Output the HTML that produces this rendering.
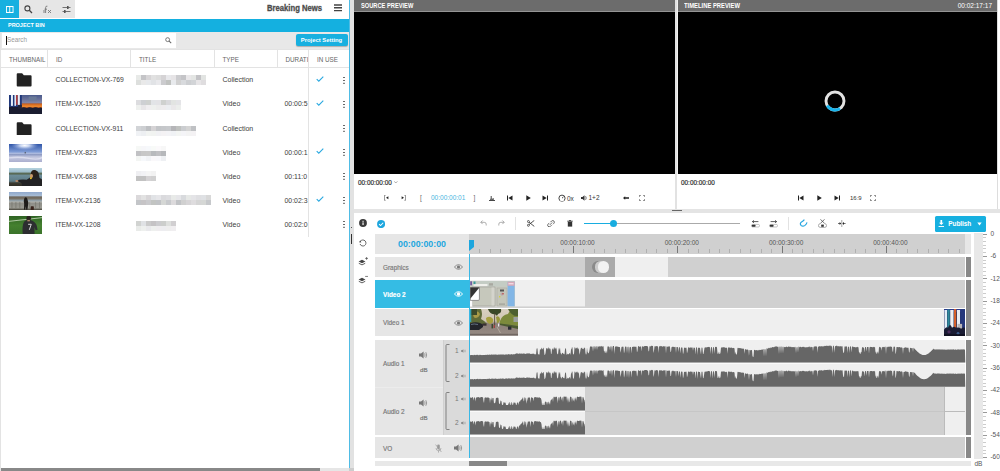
<!DOCTYPE html>
<html><head><meta charset="utf-8"><title>Editor</title>
<style>
*{box-sizing:border-box;margin:0;padding:0}
html,body{width:1000px;height:471px;overflow:hidden;background:#fff;font-family:"Liberation Sans",sans-serif;color:#444}
.a{position:absolute}
.sx{display:inline-block;transform-origin:left center;white-space:nowrap}
#root{position:relative;width:1000px;height:471px;overflow:hidden;background:#fff}
/* left */
.tabblue{left:0;top:0;width:19px;height:18.3px;background:#17b0e0}
.tabgrey{left:19px;top:0;width:56px;height:18.3px;background:#e6e6e6}
.bn{left:266.5px;top:3.4px;font-weight:bold;font-size:8.2px;color:#4c4c4c;-webkit-text-stroke:.3px #4c4c4c;line-height:11px;transform:scaleX(.937);transform-origin:left center;white-space:nowrap}
.bluebar{left:0;top:19px;width:349px;height:12.5px;background:#14b0e0;color:#fff;font-weight:bold;font-size:6px;line-height:12px;padding-left:7.7px}
.srow{left:0;top:31.5px;width:349px;height:17.5px;background:#e8e8e8}
.sinput{left:2px;top:33px;width:174px;height:14.5px;background:#fff;font-size:6.3px;line-height:14.5px;color:#999;padding-left:5px}
.caret{left:6px;top:35.5px;width:1px;height:9px;background:#111}
.psbtn{left:296px;top:34px;width:52px;height:12px;background:#17b0e0;border-radius:2px;color:#fff;font-weight:bold;font-size:6.1px;line-height:12px;text-align:center;box-shadow:0 1px 1px rgba(0,0,0,.25)}
.th{top:49px;height:18.5px;font-size:6.3px;line-height:19px;color:#666;border-right:1px solid #e3e3e3;border-bottom:1px solid #e3e3e3;border-top:1px solid #e3e3e3;padding-left:8px;overflow:hidden;white-space:nowrap}
.row{left:0;width:349px;height:24px;font-size:6.8px;line-height:24.6px;color:#3c3c3c}
.row span{position:absolute;top:0;white-space:nowrap}
.fold{left:16.3px;width:16.3px;height:13.8px}
.thumb{left:8.7px;width:33.5px;height:18.8px;overflow:hidden}
.blur{height:8px;top:8px;filter:blur(1.2px);background:#e4e4e4}
.inuse{left:308px;top:49px;width:41px;height:188px;border-left:1px solid #e3e3e3;background:#fff}
.kebab{left:343.2px;width:1.7px;height:1.7px;background:#555;border-radius:1px;box-shadow:0 2.9px 0 #555,0 5.8px 0 #555}
/* right */
.phead{top:0;height:12px;background:#6c6c6c;border-bottom:1px solid #949494;color:#fff;font-weight:bold;font-size:6.7px;line-height:11.5px;padding-left:6.8px}
.black{top:12px;height:162px;background:#000}
.tc{font-size:6.4px;color:#222;line-height:9px;-webkit-text-stroke:.15px #222}
.ctrl{font-size:6.5px;color:#333;line-height:9px;white-space:nowrap}
/* timeline */
.trk{left:375px;width:94px;background:#e6e6e6;font-size:7px;color:#777}
.lane{left:469px;width:496.3px;background:#d0d0d0}
.clip{background:#efefef}
.endbar{left:966px;width:5px;background:#888}
.tk{position:absolute;top:248.5px;width:1px;height:4px;background:#b0b0b0}
.tk.mj{top:246px;height:6.5px;background:#777}
.tl{position:absolute;top:239px;width:42px;text-align:center;font-size:6.5px;line-height:8px;color:#555}
.dbt{position:absolute;left:983.2px;width:2.4px;height:1px;background:#ccc}
.dbt.mj{width:4px;background:#999}
.dbl{position:absolute;left:990.4px;font-size:6.5px;line-height:8px;color:#555}
.lbl{position:absolute;left:8px;top:.6px;font-size:6.4px;color:#777;-webkit-text-stroke:.15px currentColor}
</style></head><body><div id="root">

<!-- LEFT PANEL -->
<div class="a tabblue"><svg class="a" style="left:6px;top:5.7px" width="7.5" height="7" viewBox="0 0 10 8" preserveAspectRatio="none"><rect x=".6" y=".6" width="8.8" height="6.8" fill="none" stroke="#fff" stroke-width="1.2"/><rect x="4.4" y="0" width="1.2" height="8" fill="#fff"/></svg></div>
<div class="a tabgrey">
<svg class="a" style="left:5px;top:5px" width="9" height="9" viewBox="0 0 9 9"><circle cx="3.4" cy="3.4" r="2.5" fill="none" stroke="#444" stroke-width="1.1"/><path d="M5.3 5.3L8 8" stroke="#444" stroke-width="1.3"/></svg>
<svg class="a" style="left:24px;top:5px" width="9" height="9" viewBox="0 0 9 9"><path d="M1 8V5M2.6 8V2.5Q2.6 .8 4.4 1.2M1.5 4.2H4M5 5l3 3M8 5L5 8" stroke="#777" stroke-width=".9" fill="none"/></svg>
<svg class="a" style="left:43px;top:5px" width="9" height="9" viewBox="0 0 9 9"><path d="M.5 2.5h8M.5 6.5h8" stroke="#666" stroke-width=".9"/><rect x="5" y="1" width="1.6" height="3" fill="#555"/><rect x="2" y="5" width="1.6" height="3" fill="#555"/></svg>
</div>
<div class="a bn">Breaking News</div>
<svg class="a" style="left:334px;top:3.5px" width="8" height="8" viewBox="0 0 8 8"><path d="M0 1h8M0 3.8h8M0 6.6h8" stroke="#444" stroke-width="1.4"/></svg>
<div class="a bluebar"><span class="sx" style="transform:scaleX(.912)">PROJECT BIN</span></div>
<div class="a srow"></div>
<div class="a sinput">Search</div><div class="a caret"></div>
<svg class="a" style="left:165px;top:37px" width="7" height="7" viewBox="0 0 9 9"><circle cx="3.4" cy="3.4" r="2.5" fill="none" stroke="#666" stroke-width="1.1"/><path d="M5.3 5.3L8 8" stroke="#666" stroke-width="1.3"/></svg>
<div class="a psbtn"><span class="sx" style="transform:scaleX(.962);transform-origin:center">Project Setting</span></div>

<div class="a th" style="left:0;width:48px;border-left:1px solid #e3e3e3">THUMBNAIL</div>
<div class="a th" style="left:48px;width:83px">ID</div>
<div class="a th" style="left:131px;width:83.5px">TITLE</div>
<div class="a th" style="left:214.5px;width:63px">TYPE</div>
<div class="a th" style="left:277.5px;width:31px">DURATION</div>

<!-- rows -->
<div class="a row" style="top:68.40px"><svg class="a fold" style="top:5px" viewBox="0 0 15 13"><path d="M.5 1.2Q.5 .3 1.4 .3H5.6L7.2 2.2H13.6Q14.5 2.2 14.5 3.1V11.8Q14.5 12.7 13.6 12.7H1.4Q.5 12.7 .5 11.8Z" fill="#222"/></svg><span style="left:55.5px">COLLECTION-VX-769</span><svg class="a" style="left:136.1px;top:0" width="70" height="24" viewBox="0 0 70 24" shape-rendering="crispEdges"><rect x="0" y="6.5" width="5" height="5" fill="#e8eae8"/><rect x="5" y="6.5" width="5" height="5" fill="#c4c4c7"/><rect x="10" y="6.5" width="5" height="5" fill="#d7d5d7"/><rect x="15" y="6.5" width="5" height="5" fill="#e1e1e1"/><rect x="20" y="6.5" width="5" height="5" fill="#dddddd"/><rect x="25" y="6.5" width="5" height="5" fill="#d5d3d5"/><rect x="30" y="6.5" width="5" height="5" fill="#e8e8eb"/><rect x="35" y="6.5" width="5" height="5" fill="#e6e4e6"/><rect x="40" y="6.5" width="5" height="5" fill="#cccccf"/><rect x="45" y="6.5" width="5" height="5" fill="#c4c4c7"/><rect x="50" y="6.5" width="5" height="5" fill="#e9e7e9"/><rect x="55" y="6.5" width="5" height="5" fill="#e3e5e3"/><rect x="60" y="6.5" width="5" height="5" fill="#c3c3c6"/><rect x="65" y="6.5" width="5" height="5" fill="#e2e4e2"/><rect x="0" y="11.5" width="5" height="5" fill="#dddfdd"/><rect x="5" y="11.5" width="5" height="5" fill="#e9e9e9"/><rect x="10" y="11.5" width="5" height="5" fill="#e7e9ec"/><rect x="15" y="11.5" width="5" height="5" fill="#e1e3e6"/><rect x="20" y="11.5" width="5" height="5" fill="#e9e9ec"/><rect x="25" y="11.5" width="5" height="5" fill="#cbcbce"/><rect x="30" y="11.5" width="5" height="5" fill="#c0c2c0"/><rect x="35" y="11.5" width="5" height="5" fill="#e8eaed"/><rect x="40" y="11.5" width="5" height="5" fill="#d1d1d1"/><rect x="45" y="11.5" width="5" height="5" fill="#d8dadd"/><rect x="50" y="11.5" width="5" height="5" fill="#cdcfd2"/><rect x="55" y="11.5" width="5" height="5" fill="#d2d4d7"/><rect x="60" y="11.5" width="5" height="5" fill="#e7e5e7"/><rect x="65" y="11.5" width="5" height="5" fill="#dfdddf"/></svg><span style="left:222.5px;font-size:7px">Collection</span></div>
<div class="a row" style="top:92.45px"><svg class="a thumb" style="top:3px" viewBox="0 0 34 19" preserveAspectRatio="none"><defs><linearGradient id="gc1" x1="0" y1="0" x2="0" y2="1"><stop offset="0" stop-color="#4a5a8c"/><stop offset="1" stop-color="#8a8aa8"/></linearGradient><linearGradient id="gc2" x1="0" y1="0" x2="0" y2="1"><stop offset="0" stop-color="#c85a18"/><stop offset=".6" stop-color="#f08a30"/><stop offset="1" stop-color="#b04a18"/></linearGradient></defs><rect width="34" height="19" fill="#1a1c34"/><rect x="12" y="0" width="22" height="9" fill="url(#gc1)"/><rect x="20" y="1.5" width="8" height="4" fill="#6a7a98"/><rect x="12" y="8.5" width="22" height="5" fill="url(#gc2)"/><rect x="0" y="0" width="13" height="12" fill="#20387a"/><rect x="2" y="0" width="2" height="11" fill="#e8f0fa"/><rect x="5.5" y="0" width="1.6" height="11" fill="#dfe8f5"/><rect x="7.3" y="0" width="1.4" height="10" fill="#d04030"/><rect x="9" y="0" width="2" height="11" fill="#e8f0fa"/><rect x="0" y="13" width="34" height="6" fill="#15172a"/><path d="M0 14Q3 11.5 6 13.5Q9 11 12 13.5Q15 11.5 18 13.5Q21 11.5 24 13.5Q27 11.5 30 13.5Q32 12 34 13.5V19H0z" fill="#1a1c30"/><rect x="9" y="10" width="4" height="4" fill="#202238"/></svg><span style="left:55.5px">ITEM-VX-1520</span><svg class="a" style="left:136.1px;top:0" width="45" height="24" viewBox="0 0 45 24" shape-rendering="crispEdges"><rect x="0" y="7.7" width="5" height="5" fill="#dcdcdf"/><rect x="5" y="7.7" width="5" height="5" fill="#ced0d3"/><rect x="10" y="7.7" width="5" height="5" fill="#cfd1cf"/><rect x="15" y="7.7" width="5" height="5" fill="#e2e4e7"/><rect x="20" y="7.7" width="5" height="5" fill="#e3e3e6"/><rect x="25" y="7.7" width="5" height="5" fill="#cfd1cf"/><rect x="30" y="7.7" width="5" height="5" fill="#d9d9dc"/><rect x="35" y="7.7" width="5" height="5" fill="#e2e4e2"/><rect x="40" y="7.7" width="5" height="5" fill="#e4e4e7"/><rect x="0" y="12.7" width="5" height="5" fill="#eef0ee"/><rect x="5" y="12.7" width="5" height="5" fill="#e8e6e8"/><rect x="10" y="12.7" width="5" height="5" fill="#f0eef0"/><rect x="15" y="12.7" width="5" height="5" fill="#eef0ee"/><rect x="20" y="12.7" width="5" height="5" fill="#ececec"/><rect x="25" y="12.7" width="5" height="5" fill="#eeecee"/><rect x="30" y="12.7" width="5" height="5" fill="#eceef1"/><rect x="35" y="12.7" width="5" height="5" fill="#eae8ea"/><rect x="40" y="12.7" width="5" height="5" fill="#eceeec"/></svg><span style="left:222.5px;font-size:7px">Video</span><span style="left:284.5px;font-size:6.9px">00:00:5</span></div>
<div class="a row" style="top:116.50px"><svg class="a fold" style="top:5px" viewBox="0 0 15 13"><path d="M.5 1.2Q.5 .3 1.4 .3H5.6L7.2 2.2H13.6Q14.5 2.2 14.5 3.1V11.8Q14.5 12.7 13.6 12.7H1.4Q.5 12.7 .5 11.8Z" fill="#222"/></svg><span style="left:55.5px">COLLECTION-VX-911</span><svg class="a" style="left:136.1px;top:0" width="60" height="24" viewBox="0 0 60 24" shape-rendering="crispEdges"><rect x="0" y="8.5" width="5" height="5" fill="#d2d4d7"/><rect x="5" y="8.5" width="5" height="5" fill="#cdcfd2"/><rect x="10" y="8.5" width="5" height="5" fill="#bec0c3"/><rect x="15" y="8.5" width="5" height="5" fill="#d5d3d5"/><rect x="20" y="8.5" width="5" height="5" fill="#c3c5c8"/><rect x="25" y="8.5" width="5" height="5" fill="#c5c7ca"/><rect x="30" y="8.5" width="5" height="5" fill="#c7c9cc"/><rect x="35" y="8.5" width="5" height="5" fill="#b5b5b8"/><rect x="40" y="8.5" width="5" height="5" fill="#bfc1bf"/><rect x="45" y="8.5" width="5" height="5" fill="#cbcdd0"/><rect x="50" y="8.5" width="5" height="5" fill="#d4d4d4"/><rect x="55" y="8.5" width="5" height="5" fill="#bfc1c4"/><rect x="0" y="13.5" width="5" height="5" fill="#f0f2f5"/><rect x="5" y="13.5" width="5" height="5" fill="#edeff2"/><rect x="10" y="13.5" width="5" height="5" fill="#f2f4f2"/><rect x="15" y="13.5" width="5" height="5" fill="#f1f3f1"/><rect x="20" y="13.5" width="5" height="5" fill="#f1f1f4"/><rect x="25" y="13.5" width="5" height="5" fill="#f4f2f4"/><rect x="30" y="13.5" width="5" height="5" fill="#f3f3f6"/><rect x="35" y="13.5" width="5" height="5" fill="#f0f2f5"/><rect x="40" y="13.5" width="5" height="5" fill="#f3f5f3"/><rect x="45" y="13.5" width="5" height="5" fill="#f4f4f7"/><rect x="50" y="13.5" width="5" height="5" fill="#f3f3f3"/><rect x="55" y="13.5" width="5" height="5" fill="#f4f2f4"/></svg><span style="left:222.5px;font-size:7px">Collection</span></div>
<div class="a row" style="top:140.55px"><svg class="a thumb" style="top:3px" viewBox="0 0 34 19" preserveAspectRatio="none"><defs><linearGradient id="gs1" x1="0" y1="0" x2="0" y2="1"><stop offset="0" stop-color="#2f55a8"/><stop offset=".42" stop-color="#7f9cd6"/><stop offset=".5" stop-color="#aebce0"/><stop offset=".56" stop-color="#8f9cc4"/><stop offset=".7" stop-color="#c4c8e0"/><stop offset="1" stop-color="#a6aacb"/></linearGradient><radialGradient id="gs2" cx=".47" cy=".12" r=".4"><stop offset="0" stop-color="#fff"/><stop offset=".35" stop-color="#dfe8fa" stop-opacity=".85"/><stop offset="1" stop-color="#9fb4e4" stop-opacity="0"/></radialGradient></defs><rect width="34" height="19" fill="url(#gs1)"/><rect width="34" height="12" fill="url(#gs2)"/><path d="M0 14Q10 12.5 20 14.5T34 13.5" stroke="#e4e6f4" stroke-width="1.4" fill="none" opacity=".7"/><rect x="16" y="8" width=".8" height="1.6" fill="#333"/></svg><span style="left:55.5px">ITEM-VX-823</span><svg class="a" style="left:136.1px;top:0" width="30" height="24" viewBox="0 0 30 24" shape-rendering="crispEdges"><rect x="0" y="4.5" width="5" height="5" fill="#f6f8f6"/><rect x="5" y="4.5" width="5" height="5" fill="#f6f6f9"/><rect x="10" y="4.5" width="5" height="5" fill="#f6f8fb"/><rect x="15" y="4.5" width="5" height="5" fill="#f8faf8"/><rect x="20" y="4.5" width="5" height="5" fill="#fbf9fb"/><rect x="25" y="4.5" width="5" height="5" fill="#f7f7f7"/><rect x="0" y="9.5" width="5" height="5" fill="#c1c1c4"/><rect x="5" y="9.5" width="5" height="5" fill="#c7c7c7"/><rect x="10" y="9.5" width="5" height="5" fill="#c8c8c8"/><rect x="15" y="9.5" width="5" height="5" fill="#b8babd"/><rect x="20" y="9.5" width="5" height="5" fill="#c0c0c3"/><rect x="25" y="9.5" width="5" height="5" fill="#b6b8bb"/><rect x="0" y="14.5" width="5" height="5" fill="#f3f5f3"/><rect x="5" y="14.5" width="5" height="5" fill="#f6f8fb"/><rect x="10" y="14.5" width="5" height="5" fill="#f1f3f6"/><rect x="15" y="14.5" width="5" height="5" fill="#faf8fa"/><rect x="20" y="14.5" width="5" height="5" fill="#f8f8fb"/><rect x="25" y="14.5" width="5" height="5" fill="#eef0f3"/></svg><span style="left:222.5px;font-size:7px">Video</span><span style="left:284.5px;font-size:6.9px">00:00:1</span></div>
<div class="a row" style="top:164.60px"><svg class="a thumb" style="top:3px" viewBox="0 0 34 19" preserveAspectRatio="none"><defs><linearGradient id="gr1" x1="0" y1="0" x2="0" y2="1"><stop offset="0" stop-color="#b5d2de"/><stop offset=".2" stop-color="#9cbccc"/><stop offset=".3" stop-color="#54644c"/><stop offset=".4" stop-color="#6c8c98"/><stop offset=".7" stop-color="#5f7c86"/><stop offset=".8" stop-color="#3c3a30"/><stop offset="1" stop-color="#2c2a24"/></linearGradient></defs><rect width="34" height="19" fill="url(#gr1)"/><path d="M7 13Q12 11 18 12L22 9Q22 3 26 2.5Q30 2.5 30.5 7L31 10Q34 11 34 13V19H13Q14 15.5 11 14.5z" fill="#222224"/><ellipse cx="25.5" cy="5.5" rx="3.2" ry="3.6" fill="#2a2018"/><ellipse cx="22.8" cy="8" rx="1.6" ry="2" fill="#c89a70"/><circle cx="22.2" cy="10.4" r="1" fill="#e8c020"/><ellipse cx="8" cy="13.2" rx="1.6" ry="1" fill="#b88a68"/></svg><span style="left:55.5px">ITEM-VX-688</span><svg class="a" style="left:136.1px;top:0" width="20" height="24" viewBox="0 0 20 24" shape-rendering="crispEdges"><rect x="0" y="5.8" width="5" height="5" fill="#efeff2"/><rect x="5" y="5.8" width="5" height="5" fill="#f2f2f5"/><rect x="10" y="5.8" width="5" height="5" fill="#f5f5f5"/><rect x="15" y="5.8" width="5" height="5" fill="#f2f2f2"/><rect x="0" y="10.8" width="5" height="5" fill="#c2c2c2"/><rect x="5" y="10.8" width="5" height="5" fill="#c2c2c2"/><rect x="10" y="10.8" width="5" height="5" fill="#d4d2d4"/><rect x="15" y="10.8" width="5" height="5" fill="#d0d0d0"/></svg><span style="left:222.5px;font-size:7px">Video</span><span style="left:284.5px;font-size:6.9px">00:11:0</span></div>
<div class="a row" style="top:188.65px"><svg class="a thumb" style="top:3px" viewBox="0 0 34 19" preserveAspectRatio="none"><defs><linearGradient id="gb1" x1="0" y1="0" x2="0" y2="1"><stop offset="0" stop-color="#8fa8cc"/><stop offset=".2" stop-color="#a8bcd4"/><stop offset=".26" stop-color="#6e665c"/><stop offset=".38" stop-color="#7a7468"/><stop offset=".42" stop-color="#8a9aa4"/><stop offset=".5" stop-color="#9aa4a8"/><stop offset=".54" stop-color="#8c8c86"/><stop offset=".86" stop-color="#9a9a92"/><stop offset=".9" stop-color="#5c5a50"/><stop offset="1" stop-color="#4c4a42"/></linearGradient></defs><rect width="34" height="19" fill="url(#gb1)"/><path d="M0 10.2H34" stroke="#c4c4bc" stroke-width=".7"/><path d="M3 10V16.5M7 10V16.5M11 10V16.5M21 10V16.5M27 10V16.5M31 10V16.5" stroke="#6c6c64" stroke-width=".6"/><path d="M15.6 6.2Q17 4.4 18.4 6.2L19.6 10.5L19 16L18.6 18H17.4L17.2 14.5L16.4 18H15.2L15.4 12Q14.4 9 15.6 6.2z" fill="#1e1c1a"/><rect x="22" y="14.5" width="3.2" height="4" rx=".6" fill="#3a241c"/></svg><span style="left:55.5px">ITEM-VX-2136</span><svg class="a" style="left:136.1px;top:0" width="75" height="24" viewBox="0 0 75 24" shape-rendering="crispEdges"><rect x="0" y="6.3" width="5" height="5" fill="#dbd9db"/><rect x="5" y="6.3" width="5" height="5" fill="#e2e2e2"/><rect x="10" y="6.3" width="5" height="5" fill="#d8d6d8"/><rect x="15" y="6.3" width="5" height="5" fill="#e1e3e6"/><rect x="20" y="6.3" width="5" height="5" fill="#e6e6e9"/><rect x="25" y="6.3" width="5" height="5" fill="#dadadd"/><rect x="30" y="6.3" width="5" height="5" fill="#dddde0"/><rect x="35" y="6.3" width="5" height="5" fill="#e8eae8"/><rect x="40" y="6.3" width="5" height="5" fill="#e6e6e9"/><rect x="45" y="6.3" width="5" height="5" fill="#d8dadd"/><rect x="50" y="6.3" width="5" height="5" fill="#e6e8e6"/><rect x="55" y="6.3" width="5" height="5" fill="#e4e4e7"/><rect x="60" y="6.3" width="5" height="5" fill="#dfdfe2"/><rect x="65" y="6.3" width="5" height="5" fill="#dfe1e4"/><rect x="70" y="6.3" width="5" height="5" fill="#d8d8d8"/><rect x="0" y="11.3" width="5" height="5" fill="#c3c5c8"/><rect x="5" y="11.3" width="5" height="5" fill="#c6c4c6"/><rect x="10" y="11.3" width="5" height="5" fill="#cacacd"/><rect x="15" y="11.3" width="5" height="5" fill="#c2c4c2"/><rect x="20" y="11.3" width="5" height="5" fill="#c1c3c6"/><rect x="25" y="11.3" width="5" height="5" fill="#d5d7d5"/><rect x="30" y="11.3" width="5" height="5" fill="#c8cacd"/><rect x="35" y="11.3" width="5" height="5" fill="#dcdadc"/><rect x="40" y="11.3" width="5" height="5" fill="#c1c3c6"/><rect x="45" y="11.3" width="5" height="5" fill="#d0d0d0"/><rect x="50" y="11.3" width="5" height="5" fill="#d7d5d7"/><rect x="55" y="11.3" width="5" height="5" fill="#dedcde"/><rect x="60" y="11.3" width="5" height="5" fill="#d5d5d5"/><rect x="65" y="11.3" width="5" height="5" fill="#d5d7d5"/><rect x="70" y="11.3" width="5" height="5" fill="#c6c8cb"/></svg><span style="left:222.5px;font-size:7px">Video</span><span style="left:284.5px;font-size:6.9px">00:02:3</span></div>
<div class="a row" style="top:212.70px"><svg class="a thumb" style="top:3px" viewBox="0 0 34 19" preserveAspectRatio="none"><defs><linearGradient id="gf1" x1="0" y1="0" x2="0" y2="1"><stop offset="0" stop-color="#2f6424"/><stop offset=".5" stop-color="#44802f"/><stop offset="1" stop-color="#3a722a"/></linearGradient></defs><rect width="34" height="19" fill="url(#gf1)"/><path d="M0 5.4L34 1.6" stroke="#cfe0c4" stroke-width=".8"/><path d="M14 19Q13 9 15.5 5.5Q18 3.5 21.5 4Q26 5 28 9L29 14L27 14.5L25.8 11L26 19z" fill="#2c2e30"/><ellipse cx="20" cy="2.4" rx="2.4" ry="2.6" fill="#2a2420"/><rect x="18.6" y="4" width="2.6" height="1.4" fill="#b08868"/><path d="M19.4 8.4h3.2L20.6 14" stroke="#d8d8d8" stroke-width="1" fill="none"/></svg><span style="left:55.5px">ITEM-VX-1208</span><svg class="a" style="left:136.1px;top:0" width="40" height="24" viewBox="0 0 40 24" shape-rendering="crispEdges"><rect x="0" y="7.5" width="5" height="5" fill="#d1d3d1"/><rect x="5" y="7.5" width="5" height="5" fill="#e0e2e5"/><rect x="10" y="7.5" width="5" height="5" fill="#cbcbcb"/><rect x="15" y="7.5" width="5" height="5" fill="#c5c3c5"/><rect x="20" y="7.5" width="5" height="5" fill="#cccccf"/><rect x="25" y="7.5" width="5" height="5" fill="#cccecc"/><rect x="30" y="7.5" width="5" height="5" fill="#dee0de"/><rect x="35" y="7.5" width="5" height="5" fill="#d1cfd1"/><rect x="0" y="12.5" width="5" height="5" fill="#e9ebe9"/><rect x="5" y="12.5" width="5" height="5" fill="#eef0ee"/><rect x="10" y="12.5" width="5" height="5" fill="#e9e9ec"/><rect x="15" y="12.5" width="5" height="5" fill="#eef0ee"/><rect x="20" y="12.5" width="5" height="5" fill="#efedef"/><rect x="25" y="12.5" width="5" height="5" fill="#ededf0"/><rect x="30" y="12.5" width="5" height="5" fill="#eeeeee"/><rect x="35" y="12.5" width="5" height="5" fill="#f0eef0"/></svg><span style="left:222.5px;font-size:7px">Video</span><span style="left:284.5px;font-size:6.9px">00:02:0</span></div>

<div class="a inuse"></div>
<div class="a th" style="left:308px;width:41px;border-left:1px solid #e3e3e3;border-right:0">IN USE</div>
<svg class="a" style="left:316px;top:75.6px" width="8" height="6" viewBox="0 0 8 6"><path d="M.7 3.2L2.8 5.2L7.3 .7" stroke="#29a8e0" stroke-width="1.1" fill="none"/></svg>
<svg class="a" style="left:316px;top:99.6px" width="8" height="6" viewBox="0 0 8 6"><path d="M.7 3.2L2.8 5.2L7.3 .7" stroke="#29a8e0" stroke-width="1.1" fill="none"/></svg>
<svg class="a" style="left:316px;top:147.6px" width="8" height="6" viewBox="0 0 8 6"><path d="M.7 3.2L2.8 5.2L7.3 .7" stroke="#29a8e0" stroke-width="1.1" fill="none"/></svg>
<svg class="a" style="left:316px;top:195.6px" width="8" height="6" viewBox="0 0 8 6"><path d="M.7 3.2L2.8 5.2L7.3 .7" stroke="#29a8e0" stroke-width="1.1" fill="none"/></svg>
<div class="a kebab" style="top:76.6px"></div><div class="a kebab" style="top:100.6px"></div><div class="a kebab" style="top:124.6px"></div><div class="a kebab" style="top:148.6px"></div><div class="a kebab" style="top:172.6px"></div><div class="a kebab" style="top:196.6px"></div><div class="a kebab" style="top:220.6px"></div>
<div class="a" style="left:0;top:31.5px;width:1px;height:440px;background:#e3e3e3"></div>

<!-- splitter -->
<div class="a" style="left:1px;top:468px;width:348px;height:3px;background:#e6e6e6"></div><div class="a" style="left:1px;top:468px;width:319px;height:3px;background:#888"></div>
<div class="a" style="left:348.8px;top:0;width:1.2px;height:471px;background:#4fbce5"></div>
<div class="a" style="left:350px;top:0;width:4px;height:471px;background:#e2e2e2"></div>
<div class="a" style="left:351.2px;top:234px;width:1px;height:9.6px;background:#333"></div><div class="a" style="left:351.2px;top:226.6px;width:1px;height:1.2px;background:#555"></div>

<!-- SOURCE PREVIEW -->
<div class="a phead" style="left:354px;width:320.5px"><span class="sx" style="transform:scaleX(.853)">SOURCE PREVIEW</span></div>
<div class="a black" style="left:354px;width:320.5px"></div>
<div class="a" style="left:674.5px;top:0;width:3px;height:174px;background:#f2f2f2"></div><div class="a" style="left:675.3px;top:0;width:1.7px;height:209px;background:#e2e2e2"></div>
<div class="a" style="left:997px;top:0;width:1px;height:209px;background:#ddd"></div>
<div class="a tc" style="left:358px;top:178.4px">00:00:00:00</div><svg class="a" style="left:394.3px;top:181.4px" width="3.6" height="2.4" viewBox="0 0 3.6 2.4"><path d="M.2 .3L1.8 2L3.4 .3" stroke="#666" stroke-width=".55" fill="none"/></svg>
<svg class="a" style="left:384px;top:195.2px" width="5" height="5.6" viewBox="0 0 5 5.6"><path d="M1.6 .3H.4V5.3H1.6" stroke="#444" stroke-width=".6" fill="none"/><path d="M4.4 1.3V4.3L2 2.8z" fill="#222"/></svg>
<svg class="a" style="left:401.4px;top:195.2px" width="5" height="5.6" viewBox="0 0 5 5.6"><path d="M3.4 .3H4.6V5.3H3.4" stroke="#444" stroke-width=".6" fill="none"/><path d="M.6 1.3V4.3L3 2.8z" fill="#222"/></svg>
<div class="a ctrl" style="left:420px;top:193px;color:#666">[</div>
<div class="a ctrl" style="left:431px;top:193px;color:#4ab5e0">00:00:00:01</div>
<div class="a ctrl" style="left:473.5px;top:193px;color:#666">]</div>
<svg class="a" style="left:489px;top:195px" width="6" height="6" viewBox="0 0 6 6"><path d="M0 5.5h6M1 4.3h3.5M2.2 1v3M4.2 3.2v1.5" stroke="#333" stroke-width=".9" fill="none"/></svg>
<svg class="a" style="left:507px;top:195px" width="6" height="6" viewBox="0 0 6 6"><path d="M.5 .5v5" stroke="#222" stroke-width="1"/><path d="M5.5 .5v5L1.3 3z" fill="#222"/></svg>
<svg class="a" style="left:526px;top:195px" width="5" height="6" viewBox="0 0 5 6"><path d="M.3 .3v5.4L4.8 3z" fill="#222"/></svg>
<svg class="a" style="left:542px;top:195px" width="6" height="6" viewBox="0 0 6 6"><path d="M5.5 .5v5" stroke="#222" stroke-width="1"/><path d="M.5 .5v5L4.7 3z" fill="#222"/></svg>
<svg class="a" style="left:558px;top:194px" width="8" height="8" viewBox="0 0 8 8"><circle cx="4" cy="4.2" r="3.1" fill="none" stroke="#333" stroke-width=".9"/><path d="M4 4.2L5.5 2.8" stroke="#333" stroke-width=".9"/><rect x="2.3" y="5.6" width="3.4" height="1.6" fill="#fff"/></svg>
<div class="a ctrl" style="left:567px;top:193.5px">0x</div>
<svg class="a" style="left:581px;top:195px" width="7" height="6" viewBox="0 0 7 6"><path d="M0 2h1.5L3.5 .3v5.4L1.5 4H0z" fill="#333"/><path d="M4.6 1.2Q5.8 3 4.6 4.8" stroke="#333" stroke-width=".7" fill="none"/></svg>
<div class="a ctrl" style="left:588.5px;top:193px">1+2</div>
<svg class="a" style="left:623px;top:196px" width="6" height="4" viewBox="0 0 6 4"><path d="M0 2L2.2 .2V1.2H6V2.8H2.2V3.8z" fill="#222"/></svg>
<svg class="a" style="left:639px;top:195px" width="6" height="6" viewBox="0 0 6 6"><path d="M.4 1.8V.4H1.8M4.2 .4H5.6V1.8M5.6 4.2V5.6H4.2M1.8 5.6H.4V4.2" stroke="#555" stroke-width=".8" fill="none"/></svg>

<!-- TIMELINE PREVIEW -->
<div class="a phead" style="left:677.5px;width:319.5px"><span class="sx" style="transform:scaleX(.875)">TIMELINE PREVIEW</span></div>
<div class="a" style="left:940px;top:0;width:52px;text-align:right;color:#fff;font-size:6.5px;line-height:12px">00:02:17:17</div>
<div class="a black" style="left:677.5px;width:319.5px"></div>
<svg class="a" style="left:822.5px;top:89.3px" width="24" height="24" viewBox="0 0 24 24"><circle cx="12" cy="12" r="9" fill="none" stroke="#e2e2e2" stroke-width="2.9"/><path d="M4.21 16.5A9 9 0 0 0 17.03 19.46" stroke="#18b4ec" stroke-width="2.9" fill="none"/></svg>
<div class="a tc" style="left:681px;top:178.4px">00:00:00:00</div>
<svg class="a" style="left:798px;top:195px" width="6" height="6" viewBox="0 0 6 6"><path d="M.5 .5v5" stroke="#222" stroke-width="1"/><path d="M5.5 .5v5L1.3 3z" fill="#222"/></svg>
<svg class="a" style="left:817px;top:195px" width="5" height="6" viewBox="0 0 5 6"><path d="M.3 .3v5.4L4.8 3z" fill="#222"/></svg>
<svg class="a" style="left:834px;top:195px" width="6" height="6" viewBox="0 0 6 6"><path d="M5.5 .5v5" stroke="#222" stroke-width="1"/><path d="M.5 .5v5L4.7 3z" fill="#222"/></svg>
<div class="a ctrl" style="left:850px;top:193.5px;font-size:6px">16:9</div>
<svg class="a" style="left:870px;top:195px" width="6" height="6" viewBox="0 0 6 6"><path d="M.4 1.8V.4H1.8M4.2 .4H5.6V1.8M5.6 4.2V5.6H4.2M1.8 5.6H.4V4.2" stroke="#555" stroke-width=".8" fill="none"/></svg>

<!-- horizontal divider -->
<div class="a" style="left:354px;top:208.7px;width:646px;height:4.2px;background:#e4e4e4"></div>
<div class="a" style="left:672px;top:210.3px;width:10px;height:1px;background:#666"></div>

<!-- TIMELINE TOOLBAR -->
<svg class="a" style="left:359.1px;top:219.3px" width="8" height="8" viewBox="0 0 9 9"><circle cx="4.5" cy="4.5" r="4.4" fill="#3a3a3a"/><rect x="3.9" y="3.8" width="1.3" height="3" fill="#fff"/><rect x="3.9" y="2" width="1.3" height="1.2" fill="#fff"/></svg>
<svg class="a" style="left:376.9px;top:219.5px" width="8.2" height="8.2" viewBox="0 0 9 9"><circle cx="4.5" cy="4.5" r="4.4" fill="#1da6de"/><path d="M2.3 4.6L3.9 6.2L6.8 3" stroke="#fff" stroke-width="1.1" fill="none"/></svg>
<svg class="a" style="left:359px;top:239.2px" width="8" height="8" viewBox="0 0 9 9"><path d="M1.6 2.6A3.4 3.4 0 1 1 1.2 5.6" fill="none" stroke="#444" stroke-width=".9"/><path d="M0 3.6L2.6 3.8L1.6 1.4z" fill="#444"/></svg>
<svg class="a" style="left:358.2px;top:256.8px" width="10.5" height="9.5" viewBox="0 0 11 10"><path d="M4.2 3L.6 4.8L4.2 6.6L7.8 4.8z" fill="#444"/><path d="M.8 6.6L4.2 8.3L7.6 6.6" stroke="#444" stroke-width=".9" fill="none"/><path d="M7.5 1.5h3M9 0v3" stroke="#444" stroke-width=".7"/></svg>
<svg class="a" style="left:358.2px;top:274.8px" width="10.5" height="9.5" viewBox="0 0 11 10"><path d="M4.2 3L.6 4.8L4.2 6.6L7.8 4.8z" fill="#444"/><path d="M.8 6.6L4.2 8.3L7.6 6.6" stroke="#444" stroke-width=".9" fill="none"/><path d="M7.5 1.5h3" stroke="#444" stroke-width=".7"/></svg>

<svg class="a" style="left:480px;top:220px" width="7" height="6" viewBox="0 0 7 6"><path d="M2.6 .5L.8 2.3L2.6 4.1M.8 2.3H4.2Q6.2 2.3 6.2 4.2V5.5" stroke="#999" stroke-width=".8" fill="none"/></svg>
<svg class="a" style="left:498px;top:220px" width="7" height="6" viewBox="0 0 7 6"><path d="M4.4 .5L6.2 2.3L4.4 4.1M6.2 2.3H2.8Q.8 2.3 .8 4.2V5.5" stroke="#999" stroke-width=".8" fill="none"/></svg>
<div class="a" style="left:515px;top:217px;width:1px;height:13px;background:#e2e2e2"></div>
<svg class="a" style="left:527px;top:220px" width="7.6" height="7" viewBox="0 0 7.6 7"><path d="M2 2.2L7.3 6.4M2 4.6L7.3 .4" stroke="#333" stroke-width=".85"/><circle cx="1.4" cy="1.5" r="1" fill="none" stroke="#333" stroke-width=".75"/><circle cx="1.4" cy="5.3" r="1" fill="none" stroke="#333" stroke-width=".75"/></svg>
<svg class="a" style="left:546.5px;top:219.6px" width="8" height="7.4" viewBox="0 0 8 7.4"><path d="M3.4 2.2L4.6 1Q5.8 0 7 1.1Q7.9 2.2 6.9 3.3L5.9 4.3M4.6 5.2L3.4 6.4Q2.2 7.4 1 6.3Q.1 5.2 1.1 4.1L2.1 3.1M2.8 4.9L5.2 2.5" stroke="#444" stroke-width=".8" fill="none"/></svg>
<svg class="a" style="left:567px;top:219.5px" width="6" height="7" viewBox="0 0 6 7"><path d="M.3 1.2h5.4M2 .4h2" stroke="#333" stroke-width=".9"/><path d="M.8 1.8h4.4V6.6H.8z" fill="#333"/></svg>
<div class="a" style="left:584px;top:223px;width:30px;height:1.3px;background:#18ade0"></div>
<div class="a" style="left:614px;top:223.3px;width:126px;height:1px;background:#aaa"></div>
<div class="a" style="left:609.7px;top:220px;width:7.2px;height:7.2px;border-radius:50%;background:#18ade0"></div>
<svg class="a" style="left:750.6px;top:219.5px" width="9" height="8" viewBox="0 0 9 8"><path d="M3 .4L1.4 1.6L3 2.8M1.4 1.6H7.4" stroke="#333" stroke-width=".8" fill="none"/><rect x=".5" y="4.4" width="8" height="2.6" rx="1.2" fill="#fff" stroke="#888" stroke-width=".5"/><rect x=".8" y="4.7" width="3.8" height="2" rx=".8" fill="#333"/></svg>
<svg class="a" style="left:768.8px;top:219.5px" width="9" height="8" viewBox="0 0 9 8"><path d="M6 .4L7.6 1.6L6 2.8M7.6 1.6H1.6" stroke="#333" stroke-width=".8" fill="none"/><rect x=".5" y="4.4" width="8" height="2.6" rx="1.2" fill="#fff" stroke="#888" stroke-width=".5"/><rect x=".8" y="4.7" width="3.8" height="2" rx=".8" fill="#333"/></svg>
<div class="a" style="left:788px;top:217px;width:1px;height:13px;background:#e2e2e2"></div>
<svg class="a" style="left:798.6px;top:219.4px" width="9" height="8.4" viewBox="0 0 9 8.4"><path d="M5.4 .6Q4.2 2.2 2.2 3.2Q.6 4.6 2 6.4Q3.8 8 6 6.4Q7.6 5 8 3.4" stroke="#27a6e0" stroke-width="1.15" fill="none"/></svg>
<svg class="a" style="left:818.4px;top:219.2px" width="9" height="8.8" viewBox="0 0 9 8.8"><path d="M2.4 .3L6.6 4.4M6.6 .3L2.4 4.4" stroke="#444" stroke-width=".75"/><path d="M2.6 4.4Q.4 4.8 .4 6.6Q.4 8.4 2.4 8.4H6.6Q8.6 8.4 8.6 6.6Q8.6 4.8 6.4 4.4" fill="#fff" stroke="#666" stroke-width=".55"/><rect x="3.2" y="5.6" width="2.6" height="2.2" fill="#333"/></svg>
<svg class="a" style="left:838.4px;top:220px" width="7.6" height="7" viewBox="0 0 7.6 7"><path d="M3.8 0V7" stroke="#666" stroke-width=".6"/><path d="M0 3.5H2M5.6 3.5H7.6" stroke="#333" stroke-width=".7"/><path d="M1.6 2L3.2 3.5L1.6 5zM6 2L4.4 3.5L6 5z" fill="#222"/></svg>

<div class="a" style="left:934.5px;top:216px;width:51.5px;height:15.5px;background:#17b0e0;border-radius:1.5px"></div>
<svg class="a" style="left:938px;top:219.6px" width="6.6" height="7.6" viewBox="0 0 7 8"><path d="M2.6 0h1.8v2.8H6L3.5 5.4L1 2.8h1.6z" fill="#fff"/><rect x=".6" y="6.4" width="5.8" height="1.2" fill="#fff"/></svg>
<div class="a" style="left:948.3px;top:219px;color:#fff;font-weight:bold;font-size:6.5px;line-height:9px;letter-spacing:-.1px">Publish</div>
<svg class="a" style="left:977px;top:222px" width="5" height="4" viewBox="0 0 5 4"><path d="M.3 .5h4.4L2.5 3.6z" fill="#fff"/></svg>

<!-- TRACK HEADERS -->
<div class="a trk" style="top:234px;height:20px;color:#1da6de;font-weight:bold;font-size:8.8px;line-height:20px;text-align:center">00:00:00:00</div>
<div class="a" style="left:468.5px;top:234px;width:496.7px;height:20px;background:#d0d0d0"></div>
<div class="a" style="left:965.2px;top:234px;width:5.8px;height:20px;background:#e6e6e6"></div>
<div class="tk" style="left:479.0px"></div><div class="tk" style="left:489.5px"></div><div class="tk" style="left:499.9px"></div><div class="tk" style="left:510.3px"></div><div class="tk" style="left:520.8px"></div><div class="tk" style="left:531.2px"></div><div class="tk" style="left:541.6px"></div><div class="tk" style="left:552.0px"></div><div class="tk" style="left:562.5px"></div><div class="tk mj" style="left:572.9px"></div><div class="tl" style="left:556.5px">00:00:10:00</div><div class="tk" style="left:583.3px"></div><div class="tk" style="left:593.8px"></div><div class="tk" style="left:604.2px"></div><div class="tk" style="left:614.6px"></div><div class="tk" style="left:625.0px"></div><div class="tk" style="left:635.5px"></div><div class="tk" style="left:645.9px"></div><div class="tk" style="left:656.3px"></div><div class="tk" style="left:666.8px"></div><div class="tk mj" style="left:677.2px"></div><div class="tl" style="left:660.8px">00:00:20:00</div><div class="tk" style="left:687.6px"></div><div class="tk" style="left:698.1px"></div><div class="tk" style="left:708.5px"></div><div class="tk" style="left:718.9px"></div><div class="tk" style="left:729.4px"></div><div class="tk" style="left:739.8px"></div><div class="tk" style="left:750.2px"></div><div class="tk" style="left:760.6px"></div><div class="tk" style="left:771.1px"></div><div class="tk mj" style="left:781.5px"></div><div class="tl" style="left:765.1px">00:00:30:00</div><div class="tk" style="left:791.9px"></div><div class="tk" style="left:802.4px"></div><div class="tk" style="left:812.8px"></div><div class="tk" style="left:823.2px"></div><div class="tk" style="left:833.7px"></div><div class="tk" style="left:844.1px"></div><div class="tk" style="left:854.5px"></div><div class="tk" style="left:864.9px"></div><div class="tk" style="left:875.4px"></div><div class="tk mj" style="left:885.8px"></div><div class="tl" style="left:869.4px">00:00:40:00</div><div class="tk" style="left:896.2px"></div><div class="tk" style="left:906.7px"></div><div class="tk" style="left:917.1px"></div><div class="tk" style="left:927.5px"></div><div class="tk" style="left:938.0px"></div><div class="tk" style="left:948.4px"></div><div class="tk" style="left:958.8px"></div>

<div class="a trk" style="top:257px;height:20px;line-height:20px"><span class="lbl">Graphics</span></div>
<div class="a trk" style="top:279.7px;height:28.8px;line-height:29px;background:#35bce4;color:#fff;font-weight:bold"><span class="lbl" style="color:#fff">Video 2</span></div>
<div class="a trk" style="top:308.5px;height:27.5px;line-height:28px"><span class="lbl">Video 1</span></div>
<div class="a trk" style="top:339.5px;height:47.7px;line-height:48px"><span class="lbl">Audio 1</span></div>
<div class="a trk" style="top:387.2px;height:47.4px;line-height:48px"><span class="lbl">Audio 2</span></div>
<div class="a trk" style="top:437.4px;height:20.7px;line-height:21px"><span class="lbl">VO</span></div>
<!-- eye icons -->
<svg class="a" style="left:454px;top:264px" width="9" height="6" viewBox="0 0 9 6"><path d="M.4 3Q4.5 -1.6 8.6 3Q4.5 7.6 .4 3z" fill="none" stroke="#777" stroke-width=".8"/><circle cx="4.5" cy="3" r="1.6" fill="#777"/></svg>
<svg class="a" style="left:454px;top:291px" width="9" height="6" viewBox="0 0 9 6"><path d="M.4 3Q4.5 -1.6 8.6 3Q4.5 7.6 .4 3z" fill="none" stroke="#fff" stroke-width=".9"/><circle cx="4.5" cy="3" r="1.7" fill="#fff"/></svg>
<svg class="a" style="left:454px;top:319.5px" width="9" height="6" viewBox="0 0 9 6"><path d="M.4 3Q4.5 -1.6 8.6 3Q4.5 7.6 .4 3z" fill="none" stroke="#777" stroke-width=".8"/><circle cx="4.5" cy="3" r="1.6" fill="#777"/></svg>
<!-- audio header details -->
<div class="a" style="left:375px;top:386.9px;width:67.5px;height:1px;background:#ececec"></div><div class="a" style="left:442.5px;top:339.5px;width:26.5px;height:95.1px;background:#dadada"></div>
<div class="a" style="left:442.5px;top:339.5px;width:1px;height:95.1px;background:#d0d0d0"></div>
<svg class="a" style="left:419px;top:351px" width="9" height="8" viewBox="0 0 9 8"><path d="M0 2.6h2L4.6 .4v7.2L2 5.4H0z" fill="#777"/><path d="M5.6 2.4Q6.6 4 5.6 5.6M6.8 1.2Q8.6 4 6.8 6.8" stroke="#777" stroke-width=".7" fill="none"/></svg>
<svg class="a" style="left:419px;top:399px" width="9" height="8" viewBox="0 0 9 8"><path d="M0 2.6h2L4.6 .4v7.2L2 5.4H0z" fill="#777"/><path d="M5.6 2.4Q6.6 4 5.6 5.6M6.8 1.2Q8.6 4 6.8 6.8" stroke="#777" stroke-width=".7" fill="none"/></svg>
<div class="a" style="left:420px;top:366px;font-size:6.2px;line-height:8px;color:#777;-webkit-text-stroke:.2px #777">dB</div>
<div class="a" style="left:420px;top:414px;font-size:6.2px;line-height:8px;color:#777;-webkit-text-stroke:.2px #777">dB</div>
<svg class="a" style="left:445px;top:344px" width="5" height="38" viewBox="0 0 5 38"><path d="M4.5 .5H2Q1 .5 1 1.5V36.5Q1 37.5 2 37.5H4.5" fill="none" stroke="#777" stroke-width=".9"/></svg>
<svg class="a" style="left:445px;top:392px" width="5" height="38" viewBox="0 0 5 38"><path d="M4.5 .5H2Q1 .5 1 1.5V36.5Q1 37.5 2 37.5H4.5" fill="none" stroke="#777" stroke-width=".9"/></svg>
<div class="a" style="left:455px;top:347.3px;font-size:6.5px;line-height:8px;color:#777">1</div><svg class="a" style="left:461px;top:349.2px" width="5" height="4" viewBox="0 0 5 4"><path d="M0 1.3h1L2.4 .2v3.6L1 2.7H0z" fill="#888"/><path d="M3.1 1Q3.8 2 3.1 3M4 .5Q5 2 4 3.5" stroke="#999" stroke-width=".45" fill="none"/></svg>
<div class="a" style="left:455px;top:371.8px;font-size:6.5px;line-height:8px;color:#777">2</div><svg class="a" style="left:461px;top:373.7px" width="5" height="4" viewBox="0 0 5 4"><path d="M0 1.3h1L2.4 .2v3.6L1 2.7H0z" fill="#888"/><path d="M3.1 1Q3.8 2 3.1 3M4 .5Q5 2 4 3.5" stroke="#999" stroke-width=".45" fill="none"/></svg>
<div class="a" style="left:455px;top:395.3px;font-size:6.5px;line-height:8px;color:#777">1</div><svg class="a" style="left:461px;top:397.2px" width="5" height="4" viewBox="0 0 5 4"><path d="M0 1.3h1L2.4 .2v3.6L1 2.7H0z" fill="#888"/><path d="M3.1 1Q3.8 2 3.1 3M4 .5Q5 2 4 3.5" stroke="#999" stroke-width=".45" fill="none"/></svg>
<div class="a" style="left:455px;top:419.3px;font-size:6.5px;line-height:8px;color:#777">2</div><svg class="a" style="left:461px;top:421.2px" width="5" height="4" viewBox="0 0 5 4"><path d="M0 1.3h1L2.4 .2v3.6L1 2.7H0z" fill="#888"/><path d="M3.1 1Q3.8 2 3.1 3M4 .5Q5 2 4 3.5" stroke="#999" stroke-width=".45" fill="none"/></svg>
<svg class="a" style="left:434.5px;top:443.5px" width="7" height="9" viewBox="0 0 7 9"><rect x="2.2" y=".4" width="2.6" height="5" rx="1.3" fill="#999"/><path d="M1 4Q1 6.6 3.5 6.6Q6 6.6 6 4M3.5 6.6V8.6M.6 .6L6.4 8" stroke="#999" stroke-width=".7" fill="none"/></svg>
<svg class="a" style="left:454px;top:444px" width="9" height="8" viewBox="0 0 9 8"><path d="M0 2.6h2L4.6 .4v7.2L2 5.4H0z" fill="#777"/><path d="M5.6 2.4Q6.6 4 5.6 5.6M6.8 1.2Q8.6 4 6.8 6.8" stroke="#777" stroke-width=".7" fill="none"/></svg>

<!-- LANES -->
<div class="a lane" style="top:257px;height:20px"></div>
<div class="a" style="left:585px;top:257px;width:30px;height:20px;background:#aaa"></div>
<div class="a clip" style="left:615px;top:257px;width:53px;height:20px"></div>
<div class="a" style="left:592.3px;top:261px;width:11.8px;height:11.8px;border-radius:50%;background:#8a8a8a"></div>
<div class="a" style="left:594.5px;top:261px;width:11.8px;height:11.8px;border-radius:50%;background:#ccc"></div>
<div class="a" style="left:597.5px;top:261px;width:11.8px;height:11.8px;border-radius:50%;background:#f2f2f2"></div>

<div class="a lane" style="top:279.7px;height:28.8px"></div>
<div class="a clip" style="left:469px;top:279.7px;width:116px;height:27.3px;border-bottom:1px solid #ddd"></div>
<svg class="a" style="left:469.7px;top:281px;width:45px;height:25.5px" viewBox="0 0 45 25.5" preserveAspectRatio="none"><rect width="45" height="25.5" fill="#c9cac0"/><rect x="0" y="0" width="37.5" height="5.5" fill="#c4ccc4"/><rect x="3.5" y="3" width="14" height="2.2" fill="#f0f0ec"/><rect x="3.5" y=".5" width="2" height="2.6" fill="#3a9a9a"/><rect x=".3" y=".3" width="1.6" height="4" fill="#6a50a0"/><rect x="19" y="2.2" width="4" height="2.4" fill="#a8a8a0"/>
<rect x="2.5" y="6" width="22.5" height="19" fill="#c6c8bc" stroke="#9c9c94" stroke-width=".6"/><rect x="21.5" y="6.5" width="3" height="18" fill="#d4d4cc"/><rect x="27" y="7" width="10" height="18" fill="#c4c6ba" stroke="#a4a49c" stroke-width=".5"/><rect x="30" y="8.5" width="4" height="2" fill="#555"/><circle cx="32" cy="13" r="1.6" fill="#b8a8a8"/><circle cx="33" cy="12.8" r=".8" fill="#c04040"/><rect x="29" y="15" width="1.4" height="1.4" fill="#d8d040"/><rect x="29" y="22.5" width="6" height="1.2" fill="#a0a098"/>
<rect x="37.6" y=".8" width="7" height="24.5" fill="#82b6e6"/><rect x="37.6" y=".8" width="7" height="4" fill="#d8a8b8"/><rect x="38.5" y="2" width="5" height="1.4" fill="#f0d8e0"/>
<rect x="0" y="19" width="2.4" height="6.5" fill="#fbfbfb"/><path d="M.3 6.6H9.4V18.2Q9.4 19.4 8.2 19.4H.3z" fill="#fff" stroke="#555" stroke-width=".6"/><path d="M.3 6.6H9.4L.3 17.8z" fill="#333"/></svg>
<div class="a lane clip" style="top:308.5px;height:27.5px;background:#efefef"></div>
<svg class="a" style="left:469.7px;top:309.2px;width:48.3px;height:26.6px" viewBox="0 0 48.3 26.6" preserveAspectRatio="none"><defs><linearGradient id="gv1" x1="0" y1="0" x2="0" y2="1"><stop offset="0" stop-color="#d9d0c0"/><stop offset=".45" stop-color="#cfc6b4"/><stop offset=".55" stop-color="#8c8078"/><stop offset="1" stop-color="#968a84"/></linearGradient></defs>
<rect width="48.3" height="26.6" fill="url(#gv1)"/><path d="M0 0H11Q13 5 11 10Q15 12 17 15L0 17z" fill="#5f6a38"/><path d="M4 3Q8 1 10 5Q9 9 5 9Q2 7 4 3z" fill="#a89a48"/><path d="M0 0H7V6H0z" fill="#3c4a2c"/>
<path d="M18 0H31Q32 4 28 5Q27 8 25 5Q20 6 18 0z" fill="#3a4828"/><path d="M24.6 4V16" stroke="#4a4030" stroke-width=".8"/><path d="M16 9Q20 6 23 10Q24 14 20 15Q16 14 16 9z" fill="#a8a040"/><path d="M26 8Q29 6 30 10Q30 14 27 14z" fill="#98983c"/>
<path d="M30 12Q32 6 38 5Q40 0 48.3 0V17L30 15z" fill="#7c8a3c"/><path d="M38 0H48.3V7Q42 8 38 0z" fill="#4c6030"/><rect x="43.5" y="8" width="4.8" height="5" fill="#9aa0a0"/><path d="M30 14.5L48.3 17V20L30 16z" fill="#4a5a30"/>
<path d="M0 14.5Q5 12.5 10 14L13 15.5V18L9 21H0z" fill="#24262c"/><path d="M1 15.5Q4 14.5 8 15.5" stroke="#8090a8" stroke-width=".7" fill="none"/><rect x="12.5" y="14.5" width="4" height="2.2" fill="#3a3034"/>
<rect x="21.5" y="15" width="1.6" height="4.4" fill="#3c4a30"/><rect x="23.6" y="16" width="1.4" height="3" fill="#a04040"/><rect x="28" y="14.5" width="1.2" height="3" fill="#e8e8e8"/><rect x="38" y="17.5" width="3.4" height="3.2" fill="#2a2a34"/><path d="M27 18L30.5 24" stroke="#c8c0b0" stroke-width=".6"/>
<rect x="0" y="0" width="1.3" height="13" fill="#30b8d8" opacity=".8"/><rect x="0" y="24.8" width="48.3" height="1.8" fill="#5a504c" opacity=".6"/></svg>
<svg class="a" style="left:944.1px;top:309.2px;width:21.1px;height:26.8px" viewBox="0 0 21 27" preserveAspectRatio="none"><defs><linearGradient id="ge1" x1="0" y1="0" x2="0" y2="1"><stop offset="0" stop-color="#fff" stop-opacity="1"/><stop offset=".6" stop-color="#fff" stop-opacity=".9"/><stop offset=".8" stop-color="#fff" stop-opacity="0"/></linearGradient></defs>
<rect width="21" height="27" fill="#1c2a5c"/><rect x="0" y="0" width="21" height="3" fill="#2a3a8a"/><rect x=".4" y="1" width="2.6" height="20" fill="#e4ecf6"/><rect x="3.3" y=".5" width="2.4" height="20" fill="#2f8a9a"/><rect x="6.2" y="1" width="3.3" height="20" fill="#eef0f4"/><rect x="10" y="0" width="2.2" height="20" fill="#d8602a"/><rect x="12.9" y="1" width="3.1" height="20" fill="#e8ecf4"/><rect x="16.3" y="0" width="4.7" height="20" fill="#26387c"/>
<rect x="13.5" y="15" width="4.5" height="6" fill="#b8b4b8"/><path d="M0 21Q2 17 4 19Q6 13 8 19Q10 17 12 19Q15 18 17 20Q19 18 21 19V27H0z" fill="#1a1c34"/><circle cx="5" cy="23" r="1.6" fill="#4a2c5c"/><circle cx="14" cy="24.5" r="1.4" fill="#3a5a8a"/><rect x="0" y="25.6" width="21" height="1.4" fill="#0c0c18"/></svg>
<div class="a lane clip" style="top:339.5px;height:47.7px;background:#efefef"></div>
<div class="a" style="left:469px;top:362.6px;width:496.3px;height:1px;background:#fafafa"></div>
<div class="a lane" style="top:387.2px;height:47.4px"></div>
<div class="a clip" style="left:469px;top:387px;width:116px;height:47.5px"></div>
<div class="a" style="left:469px;top:410.6px;width:116px;height:1px;background:#fafafa"></div><div class="a" style="left:585px;top:410.6px;width:359px;height:1px;background:#c6c6c6"></div>
<div class="a clip" style="left:944px;top:387px;width:22px;height:47.5px;border-left:1px solid #bbb"></div>
<div class="a" style="left:944px;top:410.6px;width:21.3px;height:1px;background:#bbb"></div>
<svg class="a" style="left:0;top:0" width="1000" height="471" viewBox="0 0 1000 471">
<path d="M469,362.6L469.0,355.3L469.5,354.9L470.0,354.9L470.5,355.2L471.0,355.1L471.5,355.1L472.0,355.0L472.5,354.9L473.0,355.3L473.5,355.3L474.0,354.8L474.5,355.0L475.0,354.8L475.5,355.3L476.0,355.0L476.5,354.8L477.0,355.1L477.5,354.7L478.0,354.7L478.5,355.2L479.0,355.2L479.5,354.9L480.0,354.6L480.5,355.0L481.0,355.1L481.5,354.9L482.0,355.2L482.5,355.0L483.0,354.9L483.5,354.9L484.0,355.0L484.5,355.0L485.0,355.0L485.5,354.8L486.0,354.9L486.5,355.1L487.0,354.6L487.5,354.8L488.0,354.7L488.5,355.0L489.0,354.5L489.5,354.5L490.0,355.0L490.5,354.8L491.0,354.6L491.5,354.6L492.0,354.4L492.5,354.7L493.0,354.5L493.5,354.6L494.0,354.8L494.5,354.6L495.0,354.4L495.5,354.4L496.0,354.6L496.5,354.6L497.0,354.9L497.5,354.8L498.0,354.4L498.5,354.6L499.0,354.8L499.5,354.6L500.0,354.5L500.5,354.5L501.0,354.6L501.5,354.6L502.0,354.5L502.5,354.4L503.0,354.5L503.5,354.6L504.0,354.5L504.5,354.8L505.0,354.8L505.5,354.4L506.0,354.2L506.5,354.4L507.0,354.5L507.5,354.6L508.0,354.4L508.5,354.1L509.0,354.3L509.5,354.4L510.0,354.2L510.5,354.6L511.0,354.4L511.5,354.1L512.0,354.3L512.5,354.4L513.0,354.5L513.5,354.3L514.0,354.1L514.5,354.6L515.0,354.1L515.5,354.1L516.0,353.3L516.5,353.4L517.0,353.4L517.5,353.6L518.0,353.6L518.5,353.7L519.0,354.0L519.5,353.3L520.0,353.5L520.5,353.8L521.0,353.6L521.5,353.6L522.0,353.7L522.5,353.7L523.0,353.6L523.5,353.5L524.0,353.5L524.5,353.6L525.0,354.0L525.5,353.8L526.0,353.9L526.5,353.5L527.0,353.3L527.5,353.4L528.0,353.4L528.5,353.3L529.0,353.8L529.5,353.3L530.0,353.5L530.5,353.9L531.0,354.0L531.5,354.0L532.0,353.4L532.5,353.8L533.0,353.9L533.5,353.5L534.0,353.7L534.5,353.9L535.0,354.7L535.5,353.8L536.0,354.7L536.5,349.3L537.0,348.0L537.5,348.7L538.0,354.3L538.5,353.9L539.0,355.0L539.5,354.1L540.0,348.8L540.5,349.5L541.0,349.8L541.5,347.4L542.0,348.6L542.5,349.5L543.0,348.3L543.5,347.6L544.0,350.0L544.5,355.1L545.0,354.7L545.5,353.3L546.0,349.6L546.5,348.0L547.0,348.1L547.5,348.5L548.0,349.4L548.5,347.2L549.0,347.7L549.5,348.6L550.0,349.4L550.5,348.2L551.0,354.1L551.5,353.7L552.0,349.1L552.5,348.2L553.0,349.9L553.5,349.2L554.0,347.2L554.5,347.5L555.0,349.2L555.5,347.5L556.0,349.2L556.5,347.3L557.0,353.2L557.5,354.1L558.0,354.5L558.5,350.1L559.0,347.5L559.5,350.0L560.0,347.6L560.5,352.7L561.0,353.7L561.5,354.7L562.0,352.9L562.5,352.7L563.0,353.3L563.5,353.8L564.0,354.2L564.5,354.2L565.0,349.5L565.5,348.1L566.0,348.8L566.5,354.6L567.0,354.8L567.5,353.4L568.0,354.4L568.5,353.9L569.0,354.3L569.5,352.9L570.0,352.9L570.5,355.1L571.0,349.5L571.5,349.1L572.0,347.1L572.5,347.8L573.0,354.3L573.5,354.6L574.0,353.4L574.5,347.6L575.0,347.3L575.5,349.1L576.0,347.5L576.5,348.0L577.0,348.6L577.5,347.1L578.0,349.4L578.5,347.9L579.0,349.8L579.5,354.7L580.0,352.8L580.5,349.5L581.0,347.8L581.5,348.3L582.0,347.6L582.5,349.0L583.0,349.1L583.5,349.2L584.0,347.5L584.5,348.3L585.0,347.2L585.5,352.9L586.0,354.8L586.5,353.7L587.0,347.3L587.5,351.8L588.0,352.7L588.5,353.4L589.0,352.6L589.5,350.0L590.0,346.8L590.5,346.5L591.0,346.3L591.5,346.7L592.0,346.5L592.5,346.8L593.0,351.6L593.5,346.7L594.0,346.1L594.5,346.4L595.0,349.8L595.5,346.4L596.0,346.6L596.5,346.1L597.0,350.1L597.5,346.8L598.0,346.1L598.5,346.7L599.0,346.7L599.5,345.9L600.0,346.7L600.5,346.5L601.0,345.8L601.5,346.3L602.0,346.6L602.5,346.6L603.0,346.5L603.5,346.0L604.0,351.8L604.5,350.5L605.0,353.2L605.5,352.4L606.0,350.2L606.5,352.0L607.0,353.5L607.5,346.3L608.0,346.7L608.5,346.2L609.0,346.8L609.5,346.9L610.0,350.4L610.5,346.6L611.0,346.3L611.5,346.5L612.0,351.9L612.5,346.9L613.0,346.1L613.5,346.1L614.0,346.1L614.5,354.0L615.0,346.9L615.5,346.5L616.0,346.2L616.5,346.6L617.0,346.5L617.5,346.5L618.0,347.0L618.5,346.7L619.0,346.9L619.5,347.0L620.0,347.2L620.5,352.8L621.0,350.3L621.5,346.9L622.0,346.7L622.5,346.7L623.0,346.4L623.5,347.0L624.0,353.6L624.5,351.3L625.0,347.1L625.5,346.6L626.0,346.5L626.5,347.1L627.0,353.3L627.5,346.9L628.0,346.8L628.5,346.8L629.0,353.9L629.5,347.4L630.0,347.1L630.5,347.3L631.0,346.8L631.5,353.5L632.0,347.3L632.5,346.7L633.0,347.0L633.5,346.5L634.0,346.8L634.5,346.4L635.0,347.1L635.5,346.8L636.0,346.4L636.5,347.1L637.0,352.6L637.5,350.8L638.0,346.4L638.5,346.1L639.0,346.3L639.5,346.8L640.0,347.0L640.5,346.5L641.0,346.1L641.5,351.6L642.0,346.1L642.5,346.8L643.0,346.0L643.5,346.9L644.0,346.6L644.5,346.0L645.0,346.0L645.5,345.9L646.0,345.9L646.5,346.0L647.0,346.1L647.5,346.6L648.0,346.3L648.5,350.9L649.0,351.4L649.5,346.0L650.0,346.4L650.5,346.6L651.0,345.7L651.5,345.8L652.0,346.1L652.5,346.1L653.0,345.7L653.5,352.9L654.0,350.8L654.5,346.2L655.0,346.3L655.5,346.6L656.0,345.9L656.5,346.2L657.0,346.0L657.5,346.5L658.0,346.3L658.5,353.0L659.0,346.5L659.5,346.4L660.0,345.8L660.5,346.3L661.0,346.3L661.5,346.1L662.0,346.5L662.5,346.8L663.0,346.3L663.5,346.3L664.0,346.2L664.5,346.4L665.0,346.2L665.5,346.2L666.0,353.5L666.5,346.5L667.0,346.5L667.5,346.8L668.0,346.7L668.5,346.6L669.0,346.3L669.5,346.3L670.0,347.0L670.5,351.9L671.0,351.8L671.5,347.3L672.0,346.9L672.5,346.5L673.0,347.3L673.5,346.7L674.0,346.7L674.5,347.3L675.0,346.9L675.5,346.8L676.0,352.9L676.5,347.0L677.0,347.0L677.5,347.2L678.0,347.0L678.5,352.1L679.0,346.9L679.5,347.3L680.0,347.8L680.5,353.6L681.0,347.8L681.5,347.5L682.0,347.3L682.5,348.0L683.0,354.3L683.5,352.4L684.0,347.8L684.5,347.6L685.0,348.0L685.5,347.5L686.0,348.2L686.5,347.2L687.0,353.4L687.5,351.4L688.0,348.0L688.5,347.3L689.0,347.3L689.5,348.1L690.0,347.5L690.5,347.4L691.0,347.6L691.5,347.5L692.0,347.8L692.5,347.3L693.0,350.8L693.5,347.8L694.0,347.4L694.5,347.8L695.0,348.0L695.5,354.5L696.0,348.1L696.5,347.3L697.0,347.2L697.5,354.9L698.0,347.5L698.5,347.7L699.0,348.0L699.5,347.8L700.0,347.8L700.5,351.4L701.0,354.5L701.5,347.8L702.0,347.5L702.5,347.9L703.0,354.2L703.5,353.8L704.0,351.1L704.5,347.7L705.0,347.6L705.5,347.3L706.0,347.6L706.5,347.2L707.0,347.6L707.5,347.1L708.0,347.0L708.5,347.0L709.0,346.8L709.5,347.2L710.0,347.3L710.5,353.9L711.0,347.0L711.5,347.2L712.0,347.3L712.5,354.4L713.0,347.6L713.5,346.9L714.0,347.6L714.5,353.7L715.0,347.2L715.5,346.8L716.0,347.0L716.5,346.8L717.0,347.6L717.5,353.3L718.0,354.2L718.5,353.0L719.0,351.5L719.5,354.0L720.0,354.1L720.5,352.6L721.0,347.4L721.5,347.4L722.0,347.6L722.5,347.5L723.0,347.1L723.5,347.3L724.0,347.5L724.5,347.3L725.0,347.6L725.5,347.8L726.0,348.1L726.5,347.8L727.0,347.5L727.5,353.8L728.0,347.3L728.5,347.7L729.0,347.2L729.5,347.8L730.0,347.4L730.5,347.9L731.0,347.6L731.5,347.4L732.0,348.1L732.5,348.2L733.0,347.8L733.5,347.9L734.0,348.1L734.5,348.5L735.0,354.3L735.5,351.6L736.0,354.3L736.5,354.7L737.0,353.5L737.5,347.9L738.0,347.7L738.5,347.9L739.0,348.2L739.5,347.9L740.0,348.1L740.5,348.2L741.0,348.3L741.5,348.6L742.0,348.5L742.5,348.7L743.0,348.5L743.5,348.7L744.0,348.8L744.5,353.8L745.0,349.0L745.5,349.3L746.0,349.6L746.5,349.8L747.0,349.5L747.5,349.4L748.0,349.8L748.5,350.2L749.0,356.0L749.5,350.0L750.0,350.1L750.5,350.6L751.0,350.1L751.5,349.9L752.0,350.3L752.5,355.9L753.0,357.1L753.5,356.8L754.0,350.3L754.5,349.8L755.0,350.1L755.5,350.4L756.0,350.1L756.5,350.1L757.0,350.5L757.5,350.5L758.0,349.7L758.5,350.3L759.0,350.5L759.5,349.7L760.0,349.9L760.5,350.0L761.0,349.8L761.5,349.5L762.0,350.0L762.5,349.4L763.0,349.3L763.5,349.1L764.0,356.4L764.5,349.1L765.0,349.4L765.5,348.9L766.0,356.2L766.5,348.5L767.0,348.3L767.5,348.7L768.0,348.7L768.5,347.8L769.0,348.0L769.5,347.7L770.0,348.4L770.5,347.4L771.0,347.6L771.5,347.7L772.0,347.5L772.5,347.1L773.0,346.9L773.5,347.4L774.0,346.8L774.5,347.2L775.0,346.2L775.5,346.7L776.0,346.3L776.5,346.4L777.0,346.6L777.5,346.9L778.0,346.6L778.5,347.0L779.0,354.0L779.5,346.5L780.0,346.8L780.5,346.4L781.0,353.7L781.5,346.5L782.0,346.5L782.5,346.9L783.0,353.4L783.5,346.8L784.0,346.7L784.5,347.2L785.0,347.1L785.5,347.2L786.0,346.7L786.5,346.4L787.0,347.1L787.5,347.3L788.0,346.7L788.5,346.6L789.0,346.4L789.5,346.8L790.0,347.1L790.5,346.6L791.0,347.3L791.5,346.8L792.0,347.4L792.5,347.1L793.0,347.0L793.5,347.1L794.0,347.4L794.5,347.3L795.0,346.7L795.5,347.1L796.0,353.1L796.5,347.4L797.0,346.9L797.5,347.3L798.0,352.4L798.5,346.7L799.0,346.6L799.5,347.6L800.0,346.8L800.5,346.8L801.0,347.3L801.5,347.2L802.0,347.0L802.5,346.7L803.0,347.2L803.5,346.7L804.0,346.8L804.5,347.4L805.0,346.7L805.5,347.5L806.0,347.4L806.5,346.9L807.0,347.5L807.5,347.1L808.0,347.3L808.5,347.0L809.0,346.6L809.5,346.5L810.0,347.4L810.5,347.3L811.0,346.5L811.5,347.3L812.0,347.0L812.5,347.1L813.0,351.3L813.5,347.2L814.0,346.5L814.5,346.4L815.0,346.4L815.5,346.2L816.0,346.4L816.5,346.6L817.0,346.4L817.5,352.7L818.0,346.3L818.5,346.7L819.0,346.8L819.5,345.9L820.0,346.2L820.5,346.4L821.0,346.2L821.5,346.2L822.0,346.2L822.5,346.6L823.0,346.3L823.5,346.2L824.0,346.4L824.5,345.7L825.0,346.1L825.5,345.9L826.0,345.8L826.5,345.8L827.0,345.8L827.5,345.7L828.0,346.2L828.5,345.5L829.0,346.3L829.5,345.5L830.0,345.6L830.5,345.6L831.0,346.4L831.5,346.3L832.0,345.6L832.5,352.9L833.0,346.0L833.5,345.4L834.0,346.4L834.5,352.8L835.0,346.0L835.5,346.3L836.0,346.1L836.5,345.8L837.0,345.6L837.5,346.5L838.0,346.0L838.5,346.4L839.0,345.8L839.5,346.5L840.0,346.6L840.5,346.2L841.0,345.9L841.5,346.4L842.0,346.6L842.5,345.9L843.0,351.2L843.5,352.9L844.0,352.8L844.5,346.4L845.0,346.6L845.5,346.4L846.0,346.6L846.5,346.6L847.0,346.2L847.5,352.9L848.0,346.5L848.5,347.0L849.0,346.5L849.5,353.1L850.0,346.2L850.5,346.5L851.0,346.4L851.5,352.4L852.0,346.8L852.5,346.5L853.0,346.6L853.5,347.1L854.0,347.3L854.5,347.1L855.0,347.0L855.5,347.5L856.0,347.2L856.5,347.0L857.0,347.6L857.5,346.8L858.0,347.0L858.5,347.4L859.0,352.7L859.5,351.9L860.0,354.1L860.5,353.7L861.0,351.7L861.5,352.6L862.0,347.6L862.5,346.9L863.0,347.5L863.5,347.5L864.0,347.7L864.5,352.4L865.0,347.3L865.5,346.9L866.0,346.9L866.5,351.6L867.0,347.0L867.5,346.9L868.0,346.9L868.5,347.0L869.0,353.5L869.5,347.3L870.0,347.2L870.5,346.8L871.0,347.0L871.5,347.0L872.0,347.0L872.5,347.4L873.0,346.8L873.5,347.0L874.0,347.3L874.5,347.2L875.0,346.7L875.5,353.0L876.0,351.2L876.5,353.8L877.0,353.8L877.5,352.2L878.0,351.3L878.5,354.1L879.0,347.1L879.5,346.8L880.0,347.4L880.5,347.4L881.0,346.9L881.5,350.7L882.0,347.3L882.5,347.2L883.0,346.8L883.5,346.9L884.0,347.3L884.5,347.3L885.0,346.5L885.5,346.7L886.0,354.1L886.5,346.5L887.0,347.4L887.5,347.0L888.0,346.5L888.5,346.7L889.0,347.1L889.5,346.5L890.0,346.8L890.5,346.5L891.0,346.5L891.5,347.0L892.0,346.8L892.5,350.9L893.0,352.3L893.5,346.7L894.0,346.8L894.5,346.7L895.0,346.5L895.5,354.2L896.0,352.5L896.5,346.9L897.0,346.9L897.5,347.1L898.0,347.2L898.5,347.3L899.0,346.9L899.5,347.0L900.0,347.2L900.5,347.8L901.0,347.0L901.5,347.4L902.0,347.7L902.5,347.7L903.0,354.0L903.5,348.0L904.0,347.9L904.5,347.8L905.0,347.2L905.5,347.4L906.0,347.2L906.5,347.7L907.0,347.7L907.5,347.7L908.0,347.8L908.5,347.8L909.0,352.3L909.5,352.6L910.0,348.0L910.5,347.8L911.0,348.2L911.5,348.2L912.0,348.0L912.5,348.0L913.0,352.1L913.5,347.6L914.0,348.5L914.5,348.6L915.0,349.2L915.5,349.7L916.0,350.3L916.5,350.8L917.0,351.3L917.5,351.8L918.0,352.2L918.5,352.6L919.0,353.0L919.5,353.4L920.0,353.8L920.5,354.1L921.0,354.3L921.5,354.6L922.0,354.8L922.5,354.9L923.0,355.0L923.5,355.1L924.0,355.1L924.5,355.1L925.0,355.0L925.5,354.9L926.0,354.8L926.5,354.6L927.0,354.3L927.5,354.1L928.0,353.8L928.5,353.4L929.0,353.0L929.5,352.6L930.0,352.2L930.5,351.8L931.0,351.3L931.5,350.8L932.0,350.3L932.5,349.7L933.0,349.2L933.5,348.6L934.0,349.5L934.5,349.3L935.0,349.4L935.5,349.5L936.0,349.6L936.5,349.6L937.0,349.3L937.5,349.4L938.0,349.5L938.5,349.4L939.0,349.3L939.5,349.4L940.0,349.6L940.5,349.6L941.0,349.4L941.5,349.6L942.0,349.4L942.5,349.6L943.0,349.6L943.5,349.6L944.0,349.7L944.5,349.6L945.0,349.6L945.5,349.8L946.0,349.7L946.5,349.7L947.0,349.4L947.5,349.5L948.0,349.7L948.5,349.3L949.0,349.7L949.5,349.5L950.0,349.4L950.5,349.5L951.0,349.6L951.5,349.4L952.0,349.6L952.5,349.4L953.0,349.6L953.5,349.3L954.0,349.4L954.5,349.8L955.0,349.7L955.5,349.3L956.0,349.7L956.5,349.8L957.0,349.7L957.5,349.6L958.0,349.3L958.5,349.6L959.0,349.4L959.5,349.4L960.0,349.8L960.5,349.5L961.0,349.3L961.5,349.5L962.0,349.5L962.5,349.6L963.0,349.3L963.5,349.3L964.0,349.7L964.5,349.5L965.0,349.6L965.3,362.6Z" fill="#666"/><path d="M469,386.7L469.0,379.4L469.5,379.0L470.0,379.0L470.5,379.3L471.0,379.2L471.5,379.2L472.0,379.1L472.5,379.0L473.0,379.4L473.5,379.4L474.0,378.9L474.5,379.1L475.0,378.9L475.5,379.4L476.0,379.1L476.5,378.9L477.0,379.2L477.5,378.8L478.0,378.8L478.5,379.3L479.0,379.3L479.5,379.0L480.0,378.7L480.5,379.1L481.0,379.2L481.5,379.0L482.0,379.3L482.5,379.1L483.0,379.0L483.5,379.0L484.0,379.1L484.5,379.1L485.0,379.1L485.5,378.9L486.0,379.0L486.5,379.2L487.0,378.7L487.5,378.9L488.0,378.8L488.5,379.1L489.0,378.6L489.5,378.6L490.0,379.1L490.5,378.9L491.0,378.7L491.5,378.7L492.0,378.5L492.5,378.8L493.0,378.6L493.5,378.7L494.0,378.9L494.5,378.7L495.0,378.5L495.5,378.5L496.0,378.7L496.5,378.7L497.0,379.0L497.5,378.9L498.0,378.5L498.5,378.7L499.0,378.9L499.5,378.7L500.0,378.6L500.5,378.6L501.0,378.7L501.5,378.7L502.0,378.6L502.5,378.5L503.0,378.6L503.5,378.7L504.0,378.6L504.5,378.9L505.0,378.9L505.5,378.5L506.0,378.3L506.5,378.5L507.0,378.6L507.5,378.7L508.0,378.5L508.5,378.2L509.0,378.4L509.5,378.5L510.0,378.3L510.5,378.7L511.0,378.5L511.5,378.2L512.0,378.4L512.5,378.5L513.0,378.6L513.5,378.4L514.0,378.2L514.5,378.7L515.0,378.2L515.5,378.2L516.0,377.4L516.5,377.5L517.0,377.5L517.5,377.7L518.0,377.7L518.5,377.8L519.0,378.1L519.5,377.4L520.0,377.6L520.5,377.9L521.0,377.7L521.5,377.7L522.0,377.8L522.5,377.8L523.0,377.7L523.5,377.6L524.0,377.6L524.5,377.7L525.0,378.1L525.5,377.9L526.0,378.0L526.5,377.6L527.0,377.4L527.5,377.5L528.0,377.5L528.5,377.4L529.0,377.9L529.5,377.4L530.0,377.6L530.5,378.0L531.0,378.1L531.5,378.1L532.0,377.5L532.5,377.9L533.0,378.0L533.5,377.6L534.0,377.8L534.5,378.0L535.0,378.8L535.5,377.9L536.0,378.8L536.5,373.4L537.0,372.1L537.5,372.8L538.0,378.4L538.5,378.0L539.0,379.1L539.5,378.2L540.0,372.9L540.5,373.6L541.0,373.9L541.5,371.5L542.0,372.7L542.5,373.6L543.0,372.4L543.5,371.7L544.0,374.1L544.5,379.2L545.0,378.8L545.5,377.4L546.0,373.7L546.5,372.1L547.0,372.2L547.5,372.6L548.0,373.5L548.5,371.3L549.0,371.8L549.5,372.7L550.0,373.5L550.5,372.3L551.0,378.2L551.5,377.8L552.0,373.2L552.5,372.3L553.0,374.0L553.5,373.3L554.0,371.3L554.5,371.6L555.0,373.3L555.5,371.6L556.0,373.3L556.5,371.4L557.0,377.3L557.5,378.2L558.0,378.6L558.5,374.2L559.0,371.6L559.5,374.1L560.0,371.7L560.5,376.8L561.0,377.8L561.5,378.8L562.0,377.0L562.5,376.8L563.0,377.4L563.5,377.9L564.0,378.3L564.5,378.3L565.0,373.6L565.5,372.2L566.0,372.9L566.5,378.7L567.0,378.9L567.5,377.5L568.0,378.5L568.5,378.0L569.0,378.4L569.5,377.0L570.0,377.0L570.5,379.2L571.0,373.6L571.5,373.2L572.0,371.2L572.5,371.9L573.0,378.4L573.5,378.7L574.0,377.5L574.5,371.7L575.0,371.4L575.5,373.2L576.0,371.6L576.5,372.1L577.0,372.7L577.5,371.2L578.0,373.5L578.5,372.0L579.0,373.9L579.5,378.8L580.0,376.9L580.5,373.6L581.0,371.9L581.5,372.4L582.0,371.7L582.5,373.1L583.0,373.2L583.5,373.3L584.0,371.6L584.5,372.4L585.0,371.3L585.5,377.0L586.0,378.9L586.5,377.8L587.0,371.4L587.5,375.9L588.0,376.8L588.5,377.5L589.0,376.7L589.5,374.1L590.0,370.9L590.5,370.6L591.0,370.4L591.5,370.8L592.0,370.6L592.5,370.9L593.0,375.7L593.5,370.8L594.0,370.2L594.5,370.5L595.0,373.9L595.5,370.5L596.0,370.7L596.5,370.2L597.0,374.2L597.5,370.9L598.0,370.2L598.5,370.8L599.0,370.8L599.5,370.0L600.0,370.8L600.5,370.6L601.0,369.9L601.5,370.4L602.0,370.7L602.5,370.7L603.0,370.6L603.5,370.1L604.0,375.9L604.5,374.6L605.0,377.3L605.5,376.5L606.0,374.3L606.5,376.1L607.0,377.6L607.5,370.4L608.0,370.8L608.5,370.3L609.0,370.9L609.5,371.0L610.0,374.5L610.5,370.7L611.0,370.4L611.5,370.6L612.0,376.0L612.5,371.0L613.0,370.2L613.5,370.2L614.0,370.2L614.5,378.1L615.0,371.0L615.5,370.6L616.0,370.3L616.5,370.7L617.0,370.6L617.5,370.6L618.0,371.1L618.5,370.8L619.0,371.0L619.5,371.1L620.0,371.3L620.5,376.9L621.0,374.4L621.5,371.0L622.0,370.8L622.5,370.8L623.0,370.5L623.5,371.1L624.0,377.7L624.5,375.4L625.0,371.2L625.5,370.7L626.0,370.6L626.5,371.2L627.0,377.4L627.5,371.0L628.0,370.9L628.5,370.9L629.0,378.0L629.5,371.5L630.0,371.2L630.5,371.4L631.0,370.9L631.5,377.6L632.0,371.4L632.5,370.8L633.0,371.1L633.5,370.6L634.0,370.9L634.5,370.5L635.0,371.2L635.5,370.9L636.0,370.5L636.5,371.2L637.0,376.7L637.5,374.9L638.0,370.5L638.5,370.2L639.0,370.4L639.5,370.9L640.0,371.1L640.5,370.6L641.0,370.2L641.5,375.7L642.0,370.2L642.5,370.9L643.0,370.1L643.5,371.0L644.0,370.7L644.5,370.1L645.0,370.1L645.5,370.0L646.0,370.0L646.5,370.1L647.0,370.2L647.5,370.7L648.0,370.4L648.5,375.0L649.0,375.5L649.5,370.1L650.0,370.5L650.5,370.7L651.0,369.8L651.5,369.9L652.0,370.2L652.5,370.2L653.0,369.8L653.5,377.0L654.0,374.9L654.5,370.3L655.0,370.4L655.5,370.7L656.0,370.0L656.5,370.3L657.0,370.1L657.5,370.6L658.0,370.4L658.5,377.1L659.0,370.6L659.5,370.5L660.0,369.9L660.5,370.4L661.0,370.4L661.5,370.2L662.0,370.6L662.5,370.9L663.0,370.4L663.5,370.4L664.0,370.3L664.5,370.5L665.0,370.3L665.5,370.3L666.0,377.6L666.5,370.6L667.0,370.6L667.5,370.9L668.0,370.8L668.5,370.7L669.0,370.4L669.5,370.4L670.0,371.1L670.5,376.0L671.0,375.9L671.5,371.4L672.0,371.0L672.5,370.6L673.0,371.4L673.5,370.8L674.0,370.8L674.5,371.4L675.0,371.0L675.5,370.9L676.0,377.0L676.5,371.1L677.0,371.1L677.5,371.3L678.0,371.1L678.5,376.2L679.0,371.0L679.5,371.4L680.0,371.9L680.5,377.7L681.0,371.9L681.5,371.6L682.0,371.4L682.5,372.1L683.0,378.4L683.5,376.5L684.0,371.9L684.5,371.7L685.0,372.1L685.5,371.6L686.0,372.3L686.5,371.3L687.0,377.5L687.5,375.5L688.0,372.1L688.5,371.4L689.0,371.4L689.5,372.2L690.0,371.6L690.5,371.5L691.0,371.7L691.5,371.6L692.0,371.9L692.5,371.4L693.0,374.9L693.5,371.9L694.0,371.5L694.5,371.9L695.0,372.1L695.5,378.6L696.0,372.2L696.5,371.4L697.0,371.3L697.5,379.0L698.0,371.6L698.5,371.8L699.0,372.1L699.5,371.9L700.0,371.9L700.5,375.5L701.0,378.6L701.5,371.9L702.0,371.6L702.5,372.0L703.0,378.3L703.5,377.9L704.0,375.2L704.5,371.8L705.0,371.7L705.5,371.4L706.0,371.7L706.5,371.3L707.0,371.7L707.5,371.2L708.0,371.1L708.5,371.1L709.0,370.9L709.5,371.3L710.0,371.4L710.5,378.0L711.0,371.1L711.5,371.3L712.0,371.4L712.5,378.5L713.0,371.7L713.5,371.0L714.0,371.7L714.5,377.8L715.0,371.3L715.5,370.9L716.0,371.1L716.5,370.9L717.0,371.7L717.5,377.4L718.0,378.3L718.5,377.1L719.0,375.6L719.5,378.1L720.0,378.2L720.5,376.7L721.0,371.5L721.5,371.5L722.0,371.7L722.5,371.6L723.0,371.2L723.5,371.4L724.0,371.6L724.5,371.4L725.0,371.7L725.5,371.9L726.0,372.2L726.5,371.9L727.0,371.6L727.5,377.9L728.0,371.4L728.5,371.8L729.0,371.3L729.5,371.9L730.0,371.5L730.5,372.0L731.0,371.7L731.5,371.5L732.0,372.2L732.5,372.3L733.0,371.9L733.5,372.0L734.0,372.2L734.5,372.6L735.0,378.4L735.5,375.7L736.0,378.4L736.5,378.8L737.0,377.6L737.5,372.0L738.0,371.8L738.5,372.0L739.0,372.3L739.5,372.0L740.0,372.2L740.5,372.3L741.0,372.4L741.5,372.7L742.0,372.6L742.5,372.8L743.0,372.6L743.5,372.8L744.0,372.9L744.5,377.9L745.0,373.1L745.5,373.4L746.0,373.7L746.5,373.9L747.0,373.6L747.5,373.5L748.0,373.9L748.5,374.3L749.0,380.1L749.5,374.1L750.0,374.2L750.5,374.7L751.0,374.2L751.5,374.0L752.0,374.4L752.5,380.0L753.0,381.2L753.5,380.9L754.0,374.4L754.5,373.9L755.0,374.2L755.5,374.5L756.0,374.2L756.5,374.2L757.0,374.6L757.5,374.6L758.0,373.8L758.5,374.4L759.0,374.6L759.5,373.8L760.0,374.0L760.5,374.1L761.0,373.9L761.5,373.6L762.0,374.1L762.5,373.5L763.0,373.4L763.5,373.2L764.0,380.5L764.5,373.2L765.0,373.5L765.5,373.0L766.0,380.3L766.5,372.6L767.0,372.4L767.5,372.8L768.0,372.8L768.5,371.9L769.0,372.1L769.5,371.8L770.0,372.5L770.5,371.5L771.0,371.7L771.5,371.8L772.0,371.6L772.5,371.2L773.0,371.0L773.5,371.5L774.0,370.9L774.5,371.3L775.0,370.3L775.5,370.8L776.0,370.4L776.5,370.5L777.0,370.7L777.5,371.0L778.0,370.7L778.5,371.1L779.0,378.1L779.5,370.6L780.0,370.9L780.5,370.5L781.0,377.8L781.5,370.6L782.0,370.6L782.5,371.0L783.0,377.5L783.5,370.9L784.0,370.8L784.5,371.3L785.0,371.2L785.5,371.3L786.0,370.8L786.5,370.5L787.0,371.2L787.5,371.4L788.0,370.8L788.5,370.7L789.0,370.5L789.5,370.9L790.0,371.2L790.5,370.7L791.0,371.4L791.5,370.9L792.0,371.5L792.5,371.2L793.0,371.1L793.5,371.2L794.0,371.5L794.5,371.4L795.0,370.8L795.5,371.2L796.0,377.2L796.5,371.5L797.0,371.0L797.5,371.4L798.0,376.5L798.5,370.8L799.0,370.7L799.5,371.7L800.0,370.9L800.5,370.9L801.0,371.4L801.5,371.3L802.0,371.1L802.5,370.8L803.0,371.3L803.5,370.8L804.0,370.9L804.5,371.5L805.0,370.8L805.5,371.6L806.0,371.5L806.5,371.0L807.0,371.6L807.5,371.2L808.0,371.4L808.5,371.1L809.0,370.7L809.5,370.6L810.0,371.5L810.5,371.4L811.0,370.6L811.5,371.4L812.0,371.1L812.5,371.2L813.0,375.4L813.5,371.3L814.0,370.6L814.5,370.5L815.0,370.5L815.5,370.3L816.0,370.5L816.5,370.7L817.0,370.5L817.5,376.8L818.0,370.4L818.5,370.8L819.0,370.9L819.5,370.0L820.0,370.3L820.5,370.5L821.0,370.3L821.5,370.3L822.0,370.3L822.5,370.7L823.0,370.4L823.5,370.3L824.0,370.5L824.5,369.8L825.0,370.2L825.5,370.0L826.0,369.9L826.5,369.9L827.0,369.9L827.5,369.8L828.0,370.3L828.5,369.6L829.0,370.4L829.5,369.6L830.0,369.7L830.5,369.7L831.0,370.5L831.5,370.4L832.0,369.7L832.5,377.0L833.0,370.1L833.5,369.5L834.0,370.5L834.5,376.9L835.0,370.1L835.5,370.4L836.0,370.2L836.5,369.9L837.0,369.7L837.5,370.6L838.0,370.1L838.5,370.5L839.0,369.9L839.5,370.6L840.0,370.7L840.5,370.3L841.0,370.0L841.5,370.5L842.0,370.7L842.5,370.0L843.0,375.3L843.5,377.0L844.0,376.9L844.5,370.5L845.0,370.7L845.5,370.5L846.0,370.7L846.5,370.7L847.0,370.3L847.5,377.0L848.0,370.6L848.5,371.1L849.0,370.6L849.5,377.2L850.0,370.3L850.5,370.6L851.0,370.5L851.5,376.5L852.0,370.9L852.5,370.6L853.0,370.7L853.5,371.2L854.0,371.4L854.5,371.2L855.0,371.1L855.5,371.6L856.0,371.3L856.5,371.1L857.0,371.7L857.5,370.9L858.0,371.1L858.5,371.5L859.0,376.8L859.5,376.0L860.0,378.2L860.5,377.8L861.0,375.8L861.5,376.7L862.0,371.7L862.5,371.0L863.0,371.6L863.5,371.6L864.0,371.8L864.5,376.5L865.0,371.4L865.5,371.0L866.0,371.0L866.5,375.7L867.0,371.1L867.5,371.0L868.0,371.0L868.5,371.1L869.0,377.6L869.5,371.4L870.0,371.3L870.5,370.9L871.0,371.1L871.5,371.1L872.0,371.1L872.5,371.5L873.0,370.9L873.5,371.1L874.0,371.4L874.5,371.3L875.0,370.8L875.5,377.1L876.0,375.3L876.5,377.9L877.0,377.9L877.5,376.3L878.0,375.4L878.5,378.2L879.0,371.2L879.5,370.9L880.0,371.5L880.5,371.5L881.0,371.0L881.5,374.8L882.0,371.4L882.5,371.3L883.0,370.9L883.5,371.0L884.0,371.4L884.5,371.4L885.0,370.6L885.5,370.8L886.0,378.2L886.5,370.6L887.0,371.5L887.5,371.1L888.0,370.6L888.5,370.8L889.0,371.2L889.5,370.6L890.0,370.9L890.5,370.6L891.0,370.6L891.5,371.1L892.0,370.9L892.5,375.0L893.0,376.4L893.5,370.8L894.0,370.9L894.5,370.8L895.0,370.6L895.5,378.3L896.0,376.6L896.5,371.0L897.0,371.0L897.5,371.2L898.0,371.3L898.5,371.4L899.0,371.0L899.5,371.1L900.0,371.3L900.5,371.9L901.0,371.1L901.5,371.5L902.0,371.8L902.5,371.8L903.0,378.1L903.5,372.1L904.0,372.0L904.5,371.9L905.0,371.3L905.5,371.5L906.0,371.3L906.5,371.8L907.0,371.8L907.5,371.8L908.0,371.9L908.5,371.9L909.0,376.4L909.5,376.7L910.0,372.1L910.5,371.9L911.0,372.3L911.5,372.3L912.0,372.1L912.5,372.1L913.0,376.2L913.5,371.7L914.0,372.6L914.5,372.7L915.0,373.3L915.5,373.8L916.0,374.4L916.5,374.9L917.0,375.4L917.5,375.9L918.0,376.3L918.5,376.7L919.0,377.1L919.5,377.5L920.0,377.9L920.5,378.2L921.0,378.4L921.5,378.7L922.0,378.9L922.5,379.0L923.0,379.1L923.5,379.2L924.0,379.2L924.5,379.2L925.0,379.1L925.5,379.0L926.0,378.9L926.5,378.7L927.0,378.4L927.5,378.2L928.0,377.9L928.5,377.5L929.0,377.1L929.5,376.7L930.0,376.3L930.5,375.9L931.0,375.4L931.5,374.9L932.0,374.4L932.5,373.8L933.0,373.3L933.5,372.7L934.0,373.6L934.5,373.4L935.0,373.5L935.5,373.6L936.0,373.7L936.5,373.7L937.0,373.4L937.5,373.5L938.0,373.6L938.5,373.5L939.0,373.4L939.5,373.5L940.0,373.7L940.5,373.7L941.0,373.5L941.5,373.7L942.0,373.5L942.5,373.7L943.0,373.7L943.5,373.7L944.0,373.8L944.5,373.7L945.0,373.7L945.5,373.9L946.0,373.8L946.5,373.8L947.0,373.5L947.5,373.6L948.0,373.8L948.5,373.4L949.0,373.8L949.5,373.6L950.0,373.5L950.5,373.6L951.0,373.7L951.5,373.5L952.0,373.7L952.5,373.5L953.0,373.7L953.5,373.4L954.0,373.5L954.5,373.9L955.0,373.8L955.5,373.4L956.0,373.8L956.5,373.9L957.0,373.8L957.5,373.7L958.0,373.4L958.5,373.7L959.0,373.5L959.5,373.5L960.0,373.9L960.5,373.6L961.0,373.4L961.5,373.6L962.0,373.6L962.5,373.7L963.0,373.4L963.5,373.4L964.0,373.8L964.5,373.6L965.0,373.7L965.3,386.7Z" fill="#666"/><path d="M469,410.6L469.0,397.0L469.5,403.5L470.0,397.2L470.5,397.7L471.0,397.4L471.5,397.9L472.0,397.6L472.5,396.9L473.0,397.4L473.5,400.4L474.0,397.5L474.5,397.6L475.0,397.5L475.5,401.5L476.0,397.9L476.5,396.9L477.0,397.9L477.5,397.1L478.0,397.0L478.5,397.2L479.0,396.9L479.5,397.9L480.0,397.2L480.5,397.5L481.0,397.0L481.5,397.1L482.0,397.0L482.5,397.5L483.0,397.0L483.5,401.2L484.0,402.9L484.5,397.8L485.0,397.7L485.5,397.3L486.0,397.5L486.5,397.4L487.0,397.9L487.5,397.0L488.0,398.0L488.5,397.2L489.0,397.9L489.5,398.0L490.0,403.3L490.5,398.0L491.0,400.3L491.5,397.0L492.0,401.0L492.5,397.9L493.0,398.0L493.5,398.1L494.0,403.4L494.5,402.8L495.0,403.6L495.5,401.6L496.0,397.4L496.5,398.0L497.0,398.1L497.5,397.6L498.0,397.8L498.5,398.2L499.0,403.8L499.5,403.7L500.0,403.8L500.5,400.3L501.0,400.9L501.5,401.2L502.0,405.1L502.5,404.7L503.0,405.1L503.5,402.5L504.0,402.0L504.5,402.8L505.0,402.8L505.5,402.4L506.0,405.1L506.5,405.1L507.0,405.1L507.5,405.1L508.0,405.1L508.5,402.5L509.0,405.1L509.5,401.9L510.0,402.6L510.5,405.1L511.0,405.1L511.5,402.1L512.0,402.5L512.5,405.1L513.0,405.1L513.5,403.0L514.0,402.1L514.5,403.1L515.0,402.6L515.5,402.9L516.0,405.1L516.5,405.1L517.0,402.9L517.5,402.6L518.0,402.2L518.5,405.1L519.0,402.1L519.5,401.3L520.0,401.8L520.5,400.3L521.0,400.0L521.5,399.4L522.0,399.0L522.5,398.2L523.0,397.1L523.5,400.4L524.0,401.5L524.5,397.3L525.0,397.4L525.5,398.0L526.0,400.9L526.5,403.7L527.0,396.9L527.5,401.3L528.0,397.3L528.5,397.6L529.0,398.0L529.5,397.0L530.0,398.0L530.5,402.9L531.0,397.5L531.5,397.6L532.0,397.2L532.5,397.9L533.0,398.1L533.5,401.3L534.0,397.5L534.5,397.2L535.0,397.3L535.5,396.9L536.0,397.2L536.5,397.2L537.0,397.8L537.5,397.6L538.0,396.9L538.5,398.1L539.0,397.2L539.5,397.3L540.0,398.1L540.5,398.0L541.0,398.5L541.5,400.2L542.0,405.1L542.5,405.1L543.0,402.4L543.5,405.1L544.0,405.1L544.5,405.1L545.0,401.6L545.5,401.7L546.0,401.8L546.5,402.3L547.0,405.1L547.5,402.4L548.0,401.7L548.5,401.8L549.0,404.6L549.5,402.1L550.0,405.1L550.5,400.6L551.0,400.3L551.5,399.6L552.0,398.9L552.5,397.9L553.0,401.9L553.5,397.2L554.0,396.6L554.5,397.1L555.0,397.5L555.5,397.1L556.0,396.6L556.5,396.8L557.0,397.3L557.5,403.2L558.0,397.5L558.5,397.1L559.0,401.3L559.5,397.4L560.0,397.2L560.5,396.5L561.0,396.8L561.5,400.5L562.0,397.4L562.5,397.2L563.0,402.0L563.5,396.8L564.0,396.6L564.5,396.5L565.0,397.0L565.5,396.5L566.0,396.7L566.5,396.5L567.0,401.1L567.5,396.8L568.0,403.0L568.5,397.2L569.0,402.4L569.5,401.2L570.0,397.2L570.5,396.5L571.0,397.1L571.5,397.3L572.0,401.9L572.5,397.4L573.0,399.5L573.5,401.3L574.0,397.3L574.5,401.9L575.0,397.2L575.5,399.7L576.0,396.6L576.5,401.0L577.0,396.6L577.5,396.7L578.0,397.1L578.5,397.1L579.0,396.9L579.5,396.6L580.0,396.9L580.5,396.4L581.0,396.6L581.5,397.1L582.0,403.5L582.5,397.4L583.0,396.8L583.5,397.5L584.0,399.5L584.5,400.2L585.0,402.7L585,410.6Z" fill="#666"/><path d="M469,434.6L469.0,421.0L469.5,427.5L470.0,421.2L470.5,421.7L471.0,421.4L471.5,421.9L472.0,421.6L472.5,420.9L473.0,421.4L473.5,424.4L474.0,421.5L474.5,421.6L475.0,421.5L475.5,425.5L476.0,421.9L476.5,420.9L477.0,421.9L477.5,421.1L478.0,421.0L478.5,421.2L479.0,420.9L479.5,421.9L480.0,421.2L480.5,421.5L481.0,421.0L481.5,421.1L482.0,421.0L482.5,421.5L483.0,421.0L483.5,425.2L484.0,426.9L484.5,421.8L485.0,421.7L485.5,421.3L486.0,421.5L486.5,421.4L487.0,421.9L487.5,421.0L488.0,422.0L488.5,421.2L489.0,421.9L489.5,422.0L490.0,427.3L490.5,422.0L491.0,424.3L491.5,421.0L492.0,425.0L492.5,421.9L493.0,422.0L493.5,422.1L494.0,427.4L494.5,426.8L495.0,427.6L495.5,425.6L496.0,421.4L496.5,422.0L497.0,422.1L497.5,421.6L498.0,421.8L498.5,422.2L499.0,427.8L499.5,427.7L500.0,427.8L500.5,424.3L501.0,424.9L501.5,425.2L502.0,429.1L502.5,428.7L503.0,429.1L503.5,426.5L504.0,426.0L504.5,426.8L505.0,426.8L505.5,426.4L506.0,429.1L506.5,429.1L507.0,429.1L507.5,429.1L508.0,429.1L508.5,426.5L509.0,429.1L509.5,425.9L510.0,426.6L510.5,429.1L511.0,429.1L511.5,426.1L512.0,426.5L512.5,429.1L513.0,429.1L513.5,427.0L514.0,426.1L514.5,427.1L515.0,426.6L515.5,426.9L516.0,429.1L516.5,429.1L517.0,426.9L517.5,426.6L518.0,426.2L518.5,429.1L519.0,426.1L519.5,425.3L520.0,425.8L520.5,424.3L521.0,424.0L521.5,423.4L522.0,423.0L522.5,422.2L523.0,421.1L523.5,424.4L524.0,425.5L524.5,421.3L525.0,421.4L525.5,422.0L526.0,424.9L526.5,427.7L527.0,420.9L527.5,425.3L528.0,421.3L528.5,421.6L529.0,422.0L529.5,421.0L530.0,422.0L530.5,426.9L531.0,421.5L531.5,421.6L532.0,421.2L532.5,421.9L533.0,422.1L533.5,425.3L534.0,421.5L534.5,421.2L535.0,421.3L535.5,420.9L536.0,421.2L536.5,421.2L537.0,421.8L537.5,421.6L538.0,420.9L538.5,422.1L539.0,421.2L539.5,421.3L540.0,422.1L540.5,422.0L541.0,422.5L541.5,424.2L542.0,429.1L542.5,429.1L543.0,426.4L543.5,429.1L544.0,429.1L544.5,429.1L545.0,425.6L545.5,425.7L546.0,425.8L546.5,426.3L547.0,429.1L547.5,426.4L548.0,425.7L548.5,425.8L549.0,428.6L549.5,426.1L550.0,429.1L550.5,424.6L551.0,424.3L551.5,423.6L552.0,422.9L552.5,421.9L553.0,425.9L553.5,421.2L554.0,420.6L554.5,421.1L555.0,421.5L555.5,421.1L556.0,420.6L556.5,420.8L557.0,421.3L557.5,427.2L558.0,421.5L558.5,421.1L559.0,425.3L559.5,421.4L560.0,421.2L560.5,420.5L561.0,420.8L561.5,424.5L562.0,421.4L562.5,421.2L563.0,426.0L563.5,420.8L564.0,420.6L564.5,420.5L565.0,421.0L565.5,420.5L566.0,420.7L566.5,420.5L567.0,425.1L567.5,420.8L568.0,427.0L568.5,421.2L569.0,426.4L569.5,425.2L570.0,421.2L570.5,420.5L571.0,421.1L571.5,421.3L572.0,425.9L572.5,421.4L573.0,423.5L573.5,425.3L574.0,421.3L574.5,425.9L575.0,421.2L575.5,423.7L576.0,420.6L576.5,425.0L577.0,420.6L577.5,420.7L578.0,421.1L578.5,421.1L579.0,420.9L579.5,420.6L580.0,420.9L580.5,420.4L581.0,420.6L581.5,421.1L582.0,427.5L582.5,421.4L583.0,420.8L583.5,421.5L584.0,423.5L584.5,424.2L585.0,426.7L585,434.6Z" fill="#666"/>
</svg>
<div class="a lane" style="top:437.4px;height:20.7px"></div>

<!-- end bars -->
<div class="a endbar" style="top:257px;height:20px"></div>
<div class="a endbar" style="top:279.7px;height:56.3px"></div>
<div class="a endbar" style="top:339.5px;height:95.1px"></div>
<div class="a endbar" style="top:437.4px;height:20.7px"></div>

<!-- playhead -->
<div class="a" style="left:468.9px;top:254px;width:1px;height:204px;background:#39b8e6"></div>
<svg class="a" style="left:469px;top:240px" width="5" height="11" viewBox="0 0 5 11"><path d="M0 0h5v7L0 11z" fill="#1da6de"/></svg>

<!-- scrollbar -->
<div class="a" style="left:375px;top:460.7px;width:596px;height:5.5px;background:#e8e8e8"></div>
<div class="a" style="left:469px;top:460.7px;width:38px;height:5.5px;background:#888"></div>
<div class="a" style="left:349px;top:468px;width:5px;height:3px;background:#ccc"></div>

<!-- dB meter -->
<div class="a" style="left:973.8px;top:233px;width:9.4px;height:226px;background:#e8e8e8"></div>
<div class="dbt mj" style="top:233.5px"></div><div class="dbl" style="top:229.9px">0</div><div class="dbt" style="top:237.2px"></div><div class="dbt" style="top:240.9px"></div><div class="dbt" style="top:244.7px"></div><div class="dbt" style="top:248.4px"></div><div class="dbt" style="top:252.1px"></div><div class="dbt mj" style="top:255.8px"></div><div class="dbl" style="top:252.2px">-6</div><div class="dbt" style="top:259.6px"></div><div class="dbt" style="top:263.3px"></div><div class="dbt" style="top:267.0px"></div><div class="dbt" style="top:270.8px"></div><div class="dbt" style="top:274.5px"></div><div class="dbt mj" style="top:278.2px"></div><div class="dbl" style="top:274.6px">-12</div><div class="dbt" style="top:281.9px"></div><div class="dbt" style="top:285.6px"></div><div class="dbt" style="top:289.4px"></div><div class="dbt" style="top:293.1px"></div><div class="dbt" style="top:296.8px"></div><div class="dbt mj" style="top:300.6px"></div><div class="dbl" style="top:296.9px">-18</div><div class="dbt" style="top:304.3px"></div><div class="dbt" style="top:308.0px"></div><div class="dbt" style="top:311.7px"></div><div class="dbt" style="top:315.4px"></div><div class="dbt" style="top:319.2px"></div><div class="dbt mj" style="top:322.9px"></div><div class="dbl" style="top:319.3px">-24</div><div class="dbt" style="top:326.6px"></div><div class="dbt" style="top:330.3px"></div><div class="dbt" style="top:334.1px"></div><div class="dbt" style="top:337.8px"></div><div class="dbt" style="top:341.5px"></div><div class="dbt mj" style="top:345.2px"></div><div class="dbl" style="top:341.6px">-30</div><div class="dbt" style="top:349.0px"></div><div class="dbt" style="top:352.7px"></div><div class="dbt" style="top:356.4px"></div><div class="dbt" style="top:360.1px"></div><div class="dbt" style="top:363.9px"></div><div class="dbt mj" style="top:367.6px"></div><div class="dbl" style="top:364.0px">-36</div><div class="dbt" style="top:371.3px"></div><div class="dbt" style="top:375.1px"></div><div class="dbt" style="top:378.8px"></div><div class="dbt" style="top:382.5px"></div><div class="dbt" style="top:386.2px"></div><div class="dbt mj" style="top:390.0px"></div><div class="dbl" style="top:386.4px">-42</div><div class="dbt" style="top:393.7px"></div><div class="dbt" style="top:397.4px"></div><div class="dbt" style="top:401.1px"></div><div class="dbt" style="top:404.9px"></div><div class="dbt" style="top:408.6px"></div><div class="dbt mj" style="top:412.3px"></div><div class="dbl" style="top:408.7px">-48</div><div class="dbt" style="top:416.0px"></div><div class="dbt" style="top:419.8px"></div><div class="dbt" style="top:423.5px"></div><div class="dbt" style="top:427.2px"></div><div class="dbt" style="top:430.9px"></div><div class="dbt mj" style="top:434.6px"></div><div class="dbl" style="top:431.0px">-54</div><div class="dbt" style="top:438.4px"></div><div class="dbt" style="top:442.1px"></div><div class="dbt" style="top:445.8px"></div><div class="dbt" style="top:449.5px"></div><div class="dbt" style="top:453.3px"></div><div class="dbt mj" style="top:457.0px"></div><div class="dbl" style="top:453.4px">-60</div>
<div class="a" style="left:974.5px;top:460px;font-size:6.5px;line-height:8px;color:#555">dB</div>

</div></body></html>
